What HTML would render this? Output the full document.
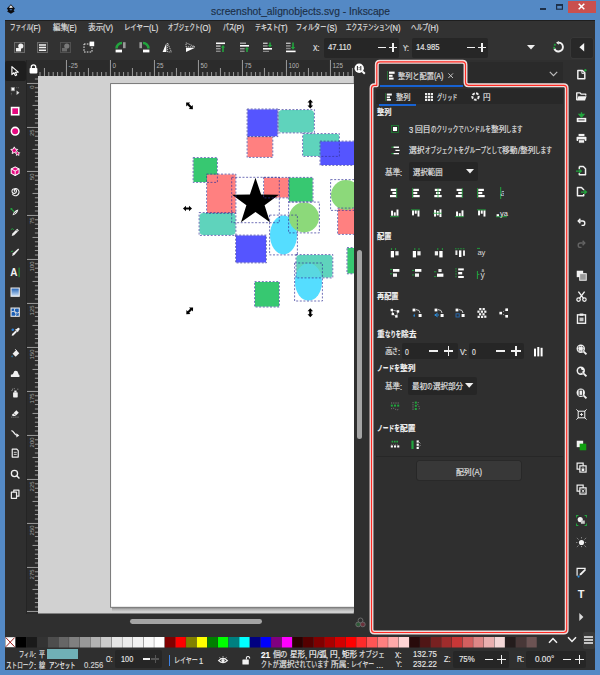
<!DOCTYPE html>
<html lang="ja"><head><meta charset="utf-8"><title>screenshot_alignobjects.svg - Inkscape</title>
<style>
html,body{margin:0;padding:0;}
body{width:600px;height:675px;overflow:hidden;background:#5489c5;position:relative;font-family:"Liberation Sans", "Noto Sans CJK JP", sans-serif;}
.b{position:absolute;display:block;}
.t{position:absolute;white-space:pre;transform-origin:0 50%;-webkit-text-stroke:0.16px currentColor;}
svg{overflow:visible;}
svg text{font-family:"Liberation Sans", "Noto Sans CJK JP", sans-serif;}
</style></head>
<body>
<div class="b" style="left:5px;top:19.6px;width:589.6px;height:650.4px;background:#2f2f2f;"></div>
<div class="b" style="left:5px;top:19.6px;width:589.6px;height:40.4px;background:#323232;"></div>
<div class="b" style="left:5px;top:19.6px;width:589.6px;height:1.2px;background:#1e1e1e;"></div>
<svg class="b" style="left:6.4px;top:3.8px;" width="9.8" height="10.2" viewBox="0 0 11 13"><path d="M5.5 0.3 L10.6 5.6 L9 8 L10.3 9.6 L5.5 12.6 L0.7 9.6 L2 8 L0.4 5.6 Z" fill="#0c0c10"/><path d="M5.5 1.6 L8.2 4.4 Q5.5 5.6 2.8 4.4 Z" fill="#e8e8e8"/><path d="M3.6 7 Q5.5 6 7.4 7 L6.4 8 L4.6 8 Z" fill="#4a78b0"/></svg>
<span class="t" id="t1_0" style="left:210.50px;top:3.50px;font-size:11px;line-height:15px;color:#1c2f47;transform:scaleX(0.9323);">screenshot_alignobjects.svg - Inkscape</span>
<div class="b" style="left:539.5px;top:8px;width:6px;height:1.6px;background:#1d2f48;"></div>
<svg class="b" style="left:556px;top:3.6px;" width="7" height="6" viewBox="0 0 7 6"><rect x=".6" y=".6" width="5.8" height="4.6" fill="none" stroke="#1d2f48" stroke-width="1.2"/><rect x=".6" y=".3" width="5.8" height="1.6" fill="#1d2f48"/></svg>
<div class="b" style="left:567.7px;top:0.5px;width:28.3px;height:12.5px;background:#c9504e;"></div>
<svg class="b" style="left:578.2px;top:3.3px;" width="7" height="7" viewBox="0 0 7 7"><path d="M.7 .7 L6.3 6.3 M6.3 .7 L.7 6.3" stroke="#fff" stroke-width="1.5"/></svg>
<span class="t" id="t2_0" style="left:9.50px;top:21.70px;font-size:8px;line-height:12px;color:#e4e4e4;transform:scaleX(0.6841);">ファイル</span>
<span class="t" id="t2_1" style="left:31.39px;top:21.70px;font-size:8.96px;line-height:12px;color:#e4e4e4;transform:scaleX(0.8400);">(F)</span>
<span class="t" id="t3_0" style="left:52.50px;top:21.70px;font-size:8px;line-height:12px;color:#e4e4e4;transform:scaleX(0.9302);">編集</span>
<span class="t" id="t3_1" style="left:67.38px;top:21.70px;font-size:8.96px;line-height:12px;color:#e4e4e4;transform:scaleX(0.8056);">(E)</span>
<span class="t" id="t4_0" style="left:88.00px;top:21.70px;font-size:8px;line-height:12px;color:#e4e4e4;transform:scaleX(0.9682);">表示</span>
<span class="t" id="t4_1" style="left:103.49px;top:21.70px;font-size:8.96px;line-height:12px;color:#e4e4e4;transform:scaleX(0.8384);">(V)</span>
<span class="t" id="t5_0" style="left:124.00px;top:21.70px;font-size:8px;line-height:12px;color:#e4e4e4;transform:scaleX(0.7964);">レイヤー</span>
<span class="t" id="t5_1" style="left:149.30px;top:21.70px;font-size:8.96px;line-height:12px;color:#e4e4e4;transform:scaleX(0.8400);">(L)</span>
<span class="t" id="t6_0" style="left:168.00px;top:21.70px;font-size:8px;line-height:12px;color:#e4e4e4;transform:scaleX(0.6694);">オブジェクト</span>
<span class="t" id="t6_1" style="left:200.13px;top:21.70px;font-size:8.96px;line-height:12px;color:#e4e4e4;transform:scaleX(0.8400);">(O)</span>
<span class="t" id="t7_0" style="left:222.50px;top:21.70px;font-size:8px;line-height:12px;color:#e4e4e4;transform:scaleX(0.7170);">パス</span>
<span class="t" id="t7_1" style="left:233.97px;top:21.70px;font-size:8.96px;line-height:12px;color:#e4e4e4;transform:scaleX(0.8400);">(P)</span>
<span class="t" id="t8_0" style="left:254.50px;top:21.70px;font-size:8px;line-height:12px;color:#e4e4e4;transform:scaleX(0.7364);">テキスト</span>
<span class="t" id="t8_1" style="left:277.89px;top:21.70px;font-size:8.96px;line-height:12px;color:#e4e4e4;transform:scaleX(0.8400);">(T)</span>
<span class="t" id="t9_0" style="left:296.30px;top:21.70px;font-size:8px;line-height:12px;color:#e4e4e4;transform:scaleX(0.7598);">フィルター</span>
<span class="t" id="t9_1" style="left:326.57px;top:21.70px;font-size:8.96px;line-height:12px;color:#e4e4e4;transform:scaleX(0.8400);">(S)</span>
<span class="t" id="t10_0" style="left:345.50px;top:21.70px;font-size:8px;line-height:12px;color:#e4e4e4;transform:scaleX(0.6909);">エクステンション</span>
<span class="t" id="t10_1" style="left:389.55px;top:21.70px;font-size:8.96px;line-height:12px;color:#e4e4e4;transform:scaleX(0.8400);">(N)</span>
<span class="t" id="t11_0" style="left:410.75px;top:21.70px;font-size:8px;line-height:12px;color:#e4e4e4;transform:scaleX(0.7105);">ヘルプ</span>
<span class="t" id="t11_1" style="left:427.80px;top:21.70px;font-size:8.96px;line-height:12px;color:#e4e4e4;transform:scaleX(0.8400);">(H)</span>
<svg class="b" style="left:13.5px;top:41.5px;" width="11" height="11" viewBox="0 0 11 11"><rect x=".5" y=".5" width="10" height="10" fill="#3c3c3c" stroke="#6a6a6a" stroke-width="1"/><circle cx="6.8" cy="4" r="2.6" fill="#f2f2f2"/><rect x="2" y="6" width="5" height="3.4" fill="#f2f2f2"/></svg>
<svg class="b" style="left:36.5px;top:41.5px;" width="11" height="11" viewBox="0 0 11 11"><rect x=".5" y=".5" width="10" height="10" fill="#3c3c3c" stroke="#6a6a6a" stroke-width="1"/><path d="M2 3 H9 M2 5.6 H9 M2 8.2 H9" stroke="#f2f2f2" stroke-width="1.5"/></svg>
<svg class="b" style="left:59.5px;top:41.5px;" width="11" height="11" viewBox="0 0 11 11"><rect x=".5" y=".5" width="10" height="10" fill="#363636" stroke="#505050" stroke-width="1"/><circle cx="6.8" cy="4" r="2.6" fill="#7a7a7a"/><rect x="2" y="6" width="5" height="3.4" fill="#6a6a6a"/></svg>
<svg class="b" style="left:82.5px;top:41px;" width="12" height="12" viewBox="0 0 12 12"><rect x="1" y="3" width="8" height="8" fill="none" stroke="#e8e8e8" stroke-width="1" stroke-dasharray="1.6 1.2"/><rect x="6.6" y=".6" width="4.6" height="4.6" fill="#fff"/></svg>
<svg class="b" style="left:114.5px;top:40.5px;" width="12" height="13" viewBox="0 0 12 13"><path d="M1.5 7.5 A5.5 5.5 0 0 1 7 2" fill="none" stroke="#22a53e" stroke-width="2.6"/><rect x="8" y="1.2" width="2.6" height="6" fill="#9a9a9a"/><rect x="0.6" y="8.6" width="6.4" height="2.8" fill="#fff"/></svg>
<svg class="b" style="left:137.5px;top:40.5px;" width="12" height="13" viewBox="0 0 12 13"><path d="M10.5 7.5 A5.5 5.5 0 0 0 5 2" fill="none" stroke="#22a53e" stroke-width="2.6"/><rect x="1.4" y="1.2" width="2.6" height="6" fill="#9a9a9a"/><rect x="5" y="8.6" width="6.4" height="2.8" fill="#fff"/></svg>
<svg class="b" style="left:162px;top:41.5px;" width="10" height="11" viewBox="0 0 10 11"><path d="M4.4 1 L4.4 10 L0.6 10 Z" fill="#fff"/><path d="M5.6 1 L5.6 10 L9.4 10 Z" fill="none" stroke="#cfcfcf" stroke-width=".9" stroke-dasharray="1.2 .8"/></svg>
<svg class="b" style="left:184.5px;top:41.5px;" width="11" height="11" viewBox="0 0 11 11"><path d="M1 5.8 L10 5.8 L1 10 Z" fill="#fff"/><path d="M1 4.8 L10 4.8 L1 .8 Z" fill="none" stroke="#cfcfcf" stroke-width=".9" stroke-dasharray="1.2 .8"/></svg>
<svg class="b" style="left:216px;top:41.5px;" width="10" height="11" viewBox="0 0 10 11"><rect x="0" y=".5" width="9" height="1.6" fill="#fff"/><rect x="0" y="3.4" width="4.6" height="1.4" fill="#bdbdbd"/><rect x="0" y="6" width="4.6" height="1.4" fill="#9a9a9a"/><rect x="0" y="8.6" width="4.6" height="1.4" fill="#8a8a8a"/><path d="M7 3 L9.2 5.6 H7.8 V10 H6.2 V5.6 H4.8 Z" fill="#22a53e"/></svg>
<svg class="b" style="left:240px;top:41.5px;" width="10" height="11" viewBox="0 0 10 11"><rect x="0" y=".6" width="6" height="1.2" fill="#bdbdbd"/><rect x="0" y="3" width="9" height="1.6" fill="#fff"/><rect x="0" y="6" width="4.6" height="1.4" fill="#9a9a9a"/><rect x="0" y="8.6" width="4.6" height="1.4" fill="#8a8a8a"/><path d="M7 5 L9.2 7.2 H7.8 V10 H6.2 V7.2 H4.8 Z" fill="#22a53e"/></svg>
<svg class="b" style="left:262.5px;top:41.5px;" width="10" height="11" viewBox="0 0 10 11"><rect x="0" y=".6" width="4.6" height="1.4" fill="#bdbdbd"/><rect x="0" y="3.2" width="4.6" height="1.4" fill="#9a9a9a"/><rect x="0" y="6" width="9" height="1.6" fill="#fff"/><rect x="0" y="8.8" width="6" height="1.2" fill="#8a8a8a"/><path d="M7 5.4 L9.2 3 H7.8 V.4 H6.2 V3 H4.8 Z" fill="#22a53e"/></svg>
<svg class="b" style="left:285.5px;top:41.5px;" width="10" height="11" viewBox="0 0 10 11"><rect x="0" y=".6" width="4.6" height="1.4" fill="#bdbdbd"/><rect x="0" y="3.2" width="4.6" height="1.4" fill="#9a9a9a"/><rect x="0" y="5.8" width="4.6" height="1.4" fill="#8a8a8a"/><rect x="0" y="8.6" width="9.6" height="1.6" fill="#fff"/><path d="M7 7.8 L9.2 5 H7.8 V.4 H6.2 V5 H4.8 Z" fill="#22a53e"/></svg>
<span class="t" id="t12_0" style="left:313.00px;top:41.60px;font-size:8.96px;line-height:12px;color:#e4e4e4;transform:scaleX(0.7675);">X:</span>
<div class="b" style="left:323.75px;top:38px;width:75px;height:19.5px;background:#262626;border-radius:2px;"></div>
<span class="t" id="t13_0" style="left:328.30px;top:40.90px;font-size:8.96px;line-height:12px;color:#e4e4e4;transform:scaleX(0.8603);">47.110</span>
<div class="b" style="left:377.5px;top:46.6px;width:8.5px;height:1.5px;background:#f0f0f0;"></div>
<div class="b" style="left:388.75px;top:46.6px;width:8.5px;height:1.5px;background:#f0f0f0;"></div>
<div class="b" style="left:392.25px;top:43.1px;width:1.5px;height:8.5px;background:#f0f0f0;"></div>
<span class="t" id="t14_0" style="left:403.00px;top:41.60px;font-size:8.96px;line-height:12px;color:#e4e4e4;transform:scaleX(0.7529);">Y:</span>
<div class="b" style="left:412px;top:38px;width:76px;height:19.5px;background:#262626;border-radius:2px;"></div>
<span class="t" id="t15_0" style="left:416.30px;top:40.90px;font-size:8.96px;line-height:12px;color:#e4e4e4;transform:scaleX(0.8543);">14.985</span>
<div class="b" style="left:466.5px;top:46.6px;width:8.5px;height:1.5px;background:#f0f0f0;"></div>
<div class="b" style="left:477.75px;top:46.6px;width:8.5px;height:1.5px;background:#f0f0f0;"></div>
<div class="b" style="left:481.25px;top:43.1px;width:1.5px;height:8.5px;background:#f0f0f0;"></div>
<svg class="b" style="left:527px;top:45px;" width="8" height="5" viewBox="0 0 8 5"><path d="M0 0 H8 L4 4.6 Z" fill="#f0f0f0"/></svg>
<svg class="b" style="left:552.5px;top:41px;" width="11" height="12" viewBox="0 0 11 12"><path d="M5.5 1.6 A4.4 4.4 0 1 1 1.4 7.6" fill="none" stroke="#f2f2f2" stroke-width="1.9"/><path d="M1.4 7.6 A4.4 4.4 0 0 1 3 2.6" fill="none" stroke="#22a53e" stroke-width="1.9" stroke-dasharray="1.8 1.2"/><path d="M5.8 0 L3 1.8 L5.8 3.8 Z" fill="#f2f2f2"/></svg>
<div class="b" style="left:571px;top:38px;width:21.5px;height:19.5px;background:#282828;border-radius:2px;box-shadow:0 0 0 .6px #3c3c3c;"></div>
<svg class="b" style="left:578.6px;top:43.4px;" width="6" height="9" viewBox="0 0 6 9"><path d="M5.2 0 V8.4 L0.4 4.2 Z" fill="#f4f4f4"/></svg>
<div class="b" style="left:5px;top:60.5px;width:20.5px;height:20px;background:#1e1e1e;border-radius:2px;"></div>
<svg class="b" style="left:9.94px;top:65.54px;" width="10.32" height="10.32" viewBox="0 0 12 12"><path d="M2.2 .8 L2.2 10 L4.6 7.8 L6.2 11.2 L7.8 10.4 L6.3 7.2 L9.6 7.2 Z" fill="#1e1e1e" stroke="#fff" stroke-width="1.3" stroke-linejoin="round"/></svg>
<svg class="b" style="left:9.94px;top:85.69px;" width="10.32" height="10.32" viewBox="0 0 12 12"><rect x="1.4" y="1.6" width="4" height="4" fill="#fff" stroke="#8c8c8c" stroke-width=".8"/><path d="M7.6 5.2 V10.6 L11 7.9 Z" fill="#d8d8d8"/><path d="M1.6 8 V10.6 M7.4 2 H10.6" stroke="#8a8a8a" stroke-width=".9" stroke-dasharray="1 1"/></svg>
<svg class="b" style="left:9.94px;top:105.84px;" width="10.32" height="10.32" viewBox="0 0 12 12"><rect x="1.8" y="1.8" width="8.4" height="8.4" fill="#e5097f" stroke="#fff" stroke-width="1.8"/></svg>
<svg class="b" style="left:9.94px;top:125.99px;" width="10.32" height="10.32" viewBox="0 0 12 12"><circle cx="6" cy="6" r="4.4" fill="#e5097f" stroke="#fff" stroke-width="1.8"/></svg>
<svg class="b" style="left:9.94px;top:146.14px;" width="10.32" height="10.32" viewBox="0 0 12 12"><path d="M5 1 L6.3 3.6 L9 4 L7 6 L7.5 8.8 L5 7.5 L2.5 8.8 L3 6 L1 4 L3.7 3.6 Z" fill="#e5097f" stroke="#fff" stroke-width="1.1" stroke-linejoin="round"/><path d="M8.6 6.2 L9.6 7.6 L11.3 7.9 L10.1 9.1 L10.4 10.9 L8.8 10.1 L7.4 10.9 L7.6 9.4" fill="#e5097f" stroke="#fff" stroke-width="1" stroke-linejoin="round"/></svg>
<svg class="b" style="left:9.94px;top:166.29px;" width="10.32" height="10.32" viewBox="0 0 12 12"><path d="M6 1 L10.6 3.4 V8.6 L6 11 L1.4 8.6 V3.4 Z" fill="#e5097f" stroke="#fff" stroke-width="1.2" stroke-linejoin="round"/><path d="M1.4 3.4 L6 5.8 L10.6 3.4 M6 5.8 V11" fill="none" stroke="#fff" stroke-width="1.1"/></svg>
<svg class="b" style="left:9.94px;top:186.44px;" width="10.32" height="10.32" viewBox="0 0 12 12"><path d="M6 6.2 A1.2 1.2 0 1 1 7.3 5 A2.6 2.6 0 1 1 4 3.6 A4.2 4.2 0 1 1 2.6 9" fill="none" stroke="#f0f0f0" stroke-width="1.3"/></svg>
<svg class="b" style="left:9.94px;top:206.59px;" width="10.32" height="10.32" viewBox="0 0 12 12"><path d="M3 9.6 C3.4 6.6 6 3.6 9.6 3 C9.4 6.2 6.6 9.2 3 9.6 Z" fill="#f0f0f0"/><path d="M1.4 2.2 L5 5.6" stroke="#22a53e" stroke-width="1.2"/><rect x=".6" y="1.2" width="2" height="2" fill="#22a53e"/><path d="M4.4 8.2 L7.2 5.4" stroke="#2f2f2f" stroke-width=".8"/></svg>
<svg class="b" style="left:9.94px;top:226.74px;" width="10.32" height="10.32" viewBox="0 0 12 12"><path d="M2 10.4 L2.8 7.6 L8.4 2 L10.4 4 L4.8 9.6 Z" fill="#f0f0f0"/><path d="M1 3 Q3 1 4.4 3.2" stroke="#22a53e" stroke-width="1.1" fill="none"/><path d="M7.2 3.2 L9.2 5.2" stroke="#2f2f2f" stroke-width=".8"/></svg>
<svg class="b" style="left:9.94px;top:246.89px;" width="10.32" height="10.32" viewBox="0 0 12 12"><path d="M2.4 10.4 L3.4 7.4 L9.6 1.6 L10.6 2.8 L5 9.2 Z" fill="#f0f0f0"/><path d="M1 6 Q2 4 3.6 5" stroke="#22a53e" stroke-width="1.1" fill="none"/></svg>
<svg class="b" style="left:9.6px;top:266.4px;" width="12" height="13" viewBox="0 0 12 13"><text x="0.2" y="10" font-size="10" font-weight="bold" fill="#f4f4f4" font-family="Liberation Sans, sans-serif">A</text><rect x="8.6" y="1.6" width="1" height="9.6" fill="#22a53e"/></svg>
<svg class="b" style="left:9.94px;top:287.19px;" width="10.32" height="10.32" viewBox="0 0 12 12"><defs><linearGradient id="gr1" x1="0" y1="0" x2="0" y2="1"><stop offset="0" stop-color="#1c5fb4"/><stop offset="1" stop-color="#cfe2f6"/></linearGradient></defs><rect x="1.2" y="1.2" width="9.6" height="9.6" fill="url(#gr1)" stroke="#f0f0f0" stroke-width="1.2"/></svg>
<svg class="b" style="left:9.94px;top:307.34px;" width="10.32" height="10.32" viewBox="0 0 12 12"><rect x="1.2" y="1.2" width="9.6" height="9.6" fill="#1c5fb4" stroke="#f0f0f0" stroke-width="1.2"/><path d="M1.2 6 Q3.6 4 6 6 T10.8 6 M6 1.2 Q4 3.6 6 6 T6 10.8" fill="none" stroke="#e8e8e8" stroke-width="1"/></svg>
<svg class="b" style="left:9.94px;top:327.49px;" width="10.32" height="10.32" viewBox="0 0 12 12"><path d="M2 10.2 L2.4 8.2 L6.6 4 L8.2 5.6 L4 9.8 Z" fill="#f0f0f0"/><path d="M6.6 2.6 L9.6 5.6 M7.6 3.8 L9.4 1.8 Q10.6 1.2 10.4 2.8 L8.6 4.6" stroke="#f0f0f0" stroke-width="1.4" fill="none"/><circle cx="3.2" cy="3.2" r="1.5" fill="#2a7fd8"/></svg>
<svg class="b" style="left:9.94px;top:347.64px;" width="10.32" height="10.32" viewBox="0 0 12 12"><path d="M3 6.6 L7.2 2.4 L10.8 6 L6.6 10.2 Z" fill="#f0f0f0"/><path d="M2.4 8 Q1 10 2.4 11 Q3.8 10 2.4 8 Z" fill="#2a9fe8"/><path d="M6 1.4 L8.2 3.6" stroke="#f0f0f0" stroke-width="1"/></svg>
<svg class="b" style="left:9.94px;top:367.79px;" width="10.32" height="10.32" viewBox="0 0 12 12"><path d="M1 10.4 H11 V8.2 Q9.8 7.6 9.6 6 Q9 3 6.4 3.2 Q4.4 3.4 4.2 5.4 Q3.8 7.4 1 7.8 Z" fill="#f0f0f0"/></svg>
<svg class="b" style="left:9.94px;top:387.94px;" width="10.32" height="10.32" viewBox="0 0 12 12"><rect x="3.6" y="5" width="5.4" height="6" rx=".8" fill="#f0f0f0"/><rect x="5" y="3" width="2.6" height="2" fill="#f0f0f0"/><path d="M2.4 1.4 h1 M4.4 .8 h1 M1.8 3 h1 M8.6 1.4 h1" stroke="#bdbdbd" stroke-width="1"/></svg>
<svg class="b" style="left:9.94px;top:408.09px;" width="10.32" height="10.32" viewBox="0 0 12 12"><path d="M2 8 L7.4 2.6 L10.2 5.4 L6.4 9.2 H3.2 Z" fill="#f0f0f0"/><path d="M4 6 L6.8 8.8" stroke="#2f2f2f" stroke-width=".8"/><path d="M1.4 10.6 H10.6" stroke="#9a9a9a" stroke-width="1" stroke-dasharray="1.4 1"/></svg>
<svg class="b" style="left:9.94px;top:428.24px;" width="10.32" height="10.32" viewBox="0 0 12 12"><path d="M1.6 3 C5 3 4.6 8.6 8.6 8.6" fill="none" stroke="#f0f0f0" stroke-width="1.5"/><path d="M7.4 6 L10.8 8.6 L7.4 11 Z" fill="#f0f0f0"/></svg>
<svg class="b" style="left:9.94px;top:448.39px;" width="10.32" height="10.32" viewBox="0 0 12 12"><path d="M2.6 1.4 H8 L9.6 3 V10.6 H2.6 Z" fill="none" stroke="#f0f0f0" stroke-width="1.4" stroke-linejoin="round"/><path d="M4.4 5 H7.8 M4.4 7.4 H7.8" stroke="#f0f0f0" stroke-width="1"/></svg>
<svg class="b" style="left:9.94px;top:468.54px;" width="10.32" height="10.32" viewBox="0 0 12 12"><circle cx="5.2" cy="5.2" r="3.6" fill="none" stroke="#f0f0f0" stroke-width="1.5"/><path d="M7.8 7.8 L11 11" stroke="#f0f0f0" stroke-width="1.7"/></svg>
<svg class="b" style="left:9.94px;top:488.69px;" width="10.32" height="10.32" viewBox="0 0 12 12"><path d="M4.4 1.2 H10.4 V8.4 H4.4 Z" fill="none" stroke="#f0f0f0" stroke-width="1.4" stroke-linejoin="round"/><path d="M1.6 3.6 H7.6 V10.8 H1.6 Z" fill="#2f2f2f" stroke="#f0f0f0" stroke-width="1.4" stroke-linejoin="round"/></svg>
<div class="b" style="left:26.5px;top:60px;width:327.3px;height:16px;background:#2b2b2b;"></div>
<div class="b" style="left:26.5px;top:76px;width:11.5px;height:537.5px;background:#2b2b2b;"></div>
<div class="b" style="left:25.5px;top:60px;width:1px;height:553.5px;background:#242424;"></div>
<svg class="b" style="left:28.5px;top:64px;" width="9" height="10" viewBox="0 0 9 10"><rect x=".6" y="4" width="7.8" height="5.4" rx=".8" fill="#fff"/><path d="M2.3 4.4 V3 A2.2 2.2 0 0 1 6.7 3 V4.4" fill="none" stroke="#fff" stroke-width="1.3"/></svg>
<svg class="b" style="left:38px;top:60px;overflow:hidden;" width="315.8" height="16" viewBox="0 0 315.8 16"><g fill="#a6a6a6"><rect x="1.55" y="12.00" width="0.9" height="4.00"/><rect x="5.95" y="8.00" width="0.9" height="8.00"/><rect x="10.35" y="12.00" width="0.9" height="4.00"/><rect x="14.75" y="12.00" width="0.9" height="4.00"/><rect x="19.15" y="12.00" width="0.9" height="4.00"/><rect x="23.55" y="12.00" width="0.9" height="4.00"/><rect x="27.95" y="0.00" width="0.9" height="16.00"/><rect x="32.35" y="12.00" width="0.9" height="4.00"/><rect x="36.75" y="12.00" width="0.9" height="4.00"/><rect x="41.15" y="12.00" width="0.9" height="4.00"/><rect x="45.55" y="12.00" width="0.9" height="4.00"/><rect x="49.95" y="8.00" width="0.9" height="8.00"/><rect x="54.35" y="12.00" width="0.9" height="4.00"/><rect x="58.75" y="12.00" width="0.9" height="4.00"/><rect x="63.15" y="12.00" width="0.9" height="4.00"/><rect x="67.55" y="12.00" width="0.9" height="4.00"/><rect x="71.95" y="0.00" width="0.9" height="16.00"/><rect x="76.35" y="12.00" width="0.9" height="4.00"/><rect x="80.75" y="12.00" width="0.9" height="4.00"/><rect x="85.15" y="12.00" width="0.9" height="4.00"/><rect x="89.55" y="12.00" width="0.9" height="4.00"/><rect x="93.95" y="8.00" width="0.9" height="8.00"/><rect x="98.35" y="12.00" width="0.9" height="4.00"/><rect x="102.75" y="12.00" width="0.9" height="4.00"/><rect x="107.15" y="12.00" width="0.9" height="4.00"/><rect x="111.55" y="12.00" width="0.9" height="4.00"/><rect x="115.95" y="0.00" width="0.9" height="16.00"/><rect x="120.35" y="12.00" width="0.9" height="4.00"/><rect x="124.75" y="12.00" width="0.9" height="4.00"/><rect x="129.15" y="12.00" width="0.9" height="4.00"/><rect x="133.55" y="12.00" width="0.9" height="4.00"/><rect x="137.95" y="8.00" width="0.9" height="8.00"/><rect x="142.35" y="12.00" width="0.9" height="4.00"/><rect x="146.75" y="12.00" width="0.9" height="4.00"/><rect x="151.15" y="12.00" width="0.9" height="4.00"/><rect x="155.55" y="12.00" width="0.9" height="4.00"/><rect x="159.95" y="0.00" width="0.9" height="16.00"/><rect x="164.35" y="12.00" width="0.9" height="4.00"/><rect x="168.75" y="12.00" width="0.9" height="4.00"/><rect x="173.15" y="12.00" width="0.9" height="4.00"/><rect x="177.55" y="12.00" width="0.9" height="4.00"/><rect x="181.95" y="8.00" width="0.9" height="8.00"/><rect x="186.35" y="12.00" width="0.9" height="4.00"/><rect x="190.75" y="12.00" width="0.9" height="4.00"/><rect x="195.15" y="12.00" width="0.9" height="4.00"/><rect x="199.55" y="12.00" width="0.9" height="4.00"/><rect x="203.95" y="0.00" width="0.9" height="16.00"/><rect x="208.35" y="12.00" width="0.9" height="4.00"/><rect x="212.75" y="12.00" width="0.9" height="4.00"/><rect x="217.15" y="12.00" width="0.9" height="4.00"/><rect x="221.55" y="12.00" width="0.9" height="4.00"/><rect x="225.95" y="8.00" width="0.9" height="8.00"/><rect x="230.35" y="12.00" width="0.9" height="4.00"/><rect x="234.75" y="12.00" width="0.9" height="4.00"/><rect x="239.15" y="12.00" width="0.9" height="4.00"/><rect x="243.55" y="12.00" width="0.9" height="4.00"/><rect x="247.95" y="0.00" width="0.9" height="16.00"/><rect x="252.35" y="12.00" width="0.9" height="4.00"/><rect x="256.75" y="12.00" width="0.9" height="4.00"/><rect x="261.15" y="12.00" width="0.9" height="4.00"/><rect x="265.55" y="12.00" width="0.9" height="4.00"/><rect x="269.95" y="8.00" width="0.9" height="8.00"/><rect x="274.35" y="12.00" width="0.9" height="4.00"/><rect x="278.75" y="12.00" width="0.9" height="4.00"/><rect x="283.15" y="12.00" width="0.9" height="4.00"/><rect x="287.55" y="12.00" width="0.9" height="4.00"/><rect x="291.95" y="0.00" width="0.9" height="16.00"/><rect x="296.35" y="12.00" width="0.9" height="4.00"/><rect x="300.75" y="12.00" width="0.9" height="4.00"/><rect x="305.15" y="12.00" width="0.9" height="4.00"/><rect x="309.55" y="12.00" width="0.9" height="4.00"/><rect x="313.95" y="8.00" width="0.9" height="8.00"/></g><text x="30.60" y="7.8" font-size="6.3" fill="#b4b4b4">-25</text><text x="74.60" y="7.8" font-size="6.3" fill="#b4b4b4">0</text><text x="118.60" y="7.8" font-size="6.3" fill="#b4b4b4">25</text><text x="162.60" y="7.8" font-size="6.3" fill="#b4b4b4">50</text><text x="206.60" y="7.8" font-size="6.3" fill="#b4b4b4">75</text><text x="250.60" y="7.8" font-size="6.3" fill="#b4b4b4">100</text><text x="294.60" y="7.8" font-size="6.3" fill="#b4b4b4">125</text></svg>
<svg class="b" style="left:26.5px;top:76px;overflow:hidden;" width="11.5" height="537.5" viewBox="0 0 11.5 537.5"><g fill="#a6a6a6"><rect x="7.90" y="2.55" width="3.60" height="0.9"/><rect x="0.00" y="6.95" width="11.50" height="0.9"/><rect x="7.90" y="11.35" width="3.60" height="0.9"/><rect x="7.90" y="15.75" width="3.60" height="0.9"/><rect x="7.90" y="20.15" width="3.60" height="0.9"/><rect x="7.90" y="24.55" width="3.60" height="0.9"/><rect x="5.50" y="28.95" width="6.00" height="0.9"/><rect x="7.90" y="33.35" width="3.60" height="0.9"/><rect x="7.90" y="37.75" width="3.60" height="0.9"/><rect x="7.90" y="42.15" width="3.60" height="0.9"/><rect x="7.90" y="46.55" width="3.60" height="0.9"/><rect x="0.00" y="50.95" width="11.50" height="0.9"/><rect x="7.90" y="55.35" width="3.60" height="0.9"/><rect x="7.90" y="59.75" width="3.60" height="0.9"/><rect x="7.90" y="64.15" width="3.60" height="0.9"/><rect x="7.90" y="68.55" width="3.60" height="0.9"/><rect x="5.50" y="72.95" width="6.00" height="0.9"/><rect x="7.90" y="77.35" width="3.60" height="0.9"/><rect x="7.90" y="81.75" width="3.60" height="0.9"/><rect x="7.90" y="86.15" width="3.60" height="0.9"/><rect x="7.90" y="90.55" width="3.60" height="0.9"/><rect x="0.00" y="94.95" width="11.50" height="0.9"/><rect x="7.90" y="99.35" width="3.60" height="0.9"/><rect x="7.90" y="103.75" width="3.60" height="0.9"/><rect x="7.90" y="108.15" width="3.60" height="0.9"/><rect x="7.90" y="112.55" width="3.60" height="0.9"/><rect x="5.50" y="116.95" width="6.00" height="0.9"/><rect x="7.90" y="121.35" width="3.60" height="0.9"/><rect x="7.90" y="125.75" width="3.60" height="0.9"/><rect x="7.90" y="130.15" width="3.60" height="0.9"/><rect x="7.90" y="134.55" width="3.60" height="0.9"/><rect x="0.00" y="138.95" width="11.50" height="0.9"/><rect x="7.90" y="143.35" width="3.60" height="0.9"/><rect x="7.90" y="147.75" width="3.60" height="0.9"/><rect x="7.90" y="152.15" width="3.60" height="0.9"/><rect x="7.90" y="156.55" width="3.60" height="0.9"/><rect x="5.50" y="160.95" width="6.00" height="0.9"/><rect x="7.90" y="165.35" width="3.60" height="0.9"/><rect x="7.90" y="169.75" width="3.60" height="0.9"/><rect x="7.90" y="174.15" width="3.60" height="0.9"/><rect x="7.90" y="178.55" width="3.60" height="0.9"/><rect x="0.00" y="182.95" width="11.50" height="0.9"/><rect x="7.90" y="187.35" width="3.60" height="0.9"/><rect x="7.90" y="191.75" width="3.60" height="0.9"/><rect x="7.90" y="196.15" width="3.60" height="0.9"/><rect x="7.90" y="200.55" width="3.60" height="0.9"/><rect x="5.50" y="204.95" width="6.00" height="0.9"/><rect x="7.90" y="209.35" width="3.60" height="0.9"/><rect x="7.90" y="213.75" width="3.60" height="0.9"/><rect x="7.90" y="218.15" width="3.60" height="0.9"/><rect x="7.90" y="222.55" width="3.60" height="0.9"/><rect x="0.00" y="226.95" width="11.50" height="0.9"/><rect x="7.90" y="231.35" width="3.60" height="0.9"/><rect x="7.90" y="235.75" width="3.60" height="0.9"/><rect x="7.90" y="240.15" width="3.60" height="0.9"/><rect x="7.90" y="244.55" width="3.60" height="0.9"/><rect x="5.50" y="248.95" width="6.00" height="0.9"/><rect x="7.90" y="253.35" width="3.60" height="0.9"/><rect x="7.90" y="257.75" width="3.60" height="0.9"/><rect x="7.90" y="262.15" width="3.60" height="0.9"/><rect x="7.90" y="266.55" width="3.60" height="0.9"/><rect x="0.00" y="270.95" width="11.50" height="0.9"/><rect x="7.90" y="275.35" width="3.60" height="0.9"/><rect x="7.90" y="279.75" width="3.60" height="0.9"/><rect x="7.90" y="284.15" width="3.60" height="0.9"/><rect x="7.90" y="288.55" width="3.60" height="0.9"/><rect x="5.50" y="292.95" width="6.00" height="0.9"/><rect x="7.90" y="297.35" width="3.60" height="0.9"/><rect x="7.90" y="301.75" width="3.60" height="0.9"/><rect x="7.90" y="306.15" width="3.60" height="0.9"/><rect x="7.90" y="310.55" width="3.60" height="0.9"/><rect x="0.00" y="314.95" width="11.50" height="0.9"/><rect x="7.90" y="319.35" width="3.60" height="0.9"/><rect x="7.90" y="323.75" width="3.60" height="0.9"/><rect x="7.90" y="328.15" width="3.60" height="0.9"/><rect x="7.90" y="332.55" width="3.60" height="0.9"/><rect x="5.50" y="336.95" width="6.00" height="0.9"/><rect x="7.90" y="341.35" width="3.60" height="0.9"/><rect x="7.90" y="345.75" width="3.60" height="0.9"/><rect x="7.90" y="350.15" width="3.60" height="0.9"/><rect x="7.90" y="354.55" width="3.60" height="0.9"/><rect x="0.00" y="358.95" width="11.50" height="0.9"/><rect x="7.90" y="363.35" width="3.60" height="0.9"/><rect x="7.90" y="367.75" width="3.60" height="0.9"/><rect x="7.90" y="372.15" width="3.60" height="0.9"/><rect x="7.90" y="376.55" width="3.60" height="0.9"/><rect x="5.50" y="380.95" width="6.00" height="0.9"/><rect x="7.90" y="385.35" width="3.60" height="0.9"/><rect x="7.90" y="389.75" width="3.60" height="0.9"/><rect x="7.90" y="394.15" width="3.60" height="0.9"/><rect x="7.90" y="398.55" width="3.60" height="0.9"/><rect x="0.00" y="402.95" width="11.50" height="0.9"/><rect x="7.90" y="407.35" width="3.60" height="0.9"/><rect x="7.90" y="411.75" width="3.60" height="0.9"/><rect x="7.90" y="416.15" width="3.60" height="0.9"/><rect x="7.90" y="420.55" width="3.60" height="0.9"/><rect x="5.50" y="424.95" width="6.00" height="0.9"/><rect x="7.90" y="429.35" width="3.60" height="0.9"/><rect x="7.90" y="433.75" width="3.60" height="0.9"/><rect x="7.90" y="438.15" width="3.60" height="0.9"/><rect x="7.90" y="442.55" width="3.60" height="0.9"/><rect x="0.00" y="446.95" width="11.50" height="0.9"/><rect x="7.90" y="451.35" width="3.60" height="0.9"/><rect x="7.90" y="455.75" width="3.60" height="0.9"/><rect x="7.90" y="460.15" width="3.60" height="0.9"/><rect x="7.90" y="464.55" width="3.60" height="0.9"/><rect x="5.50" y="468.95" width="6.00" height="0.9"/><rect x="7.90" y="473.35" width="3.60" height="0.9"/><rect x="7.90" y="477.75" width="3.60" height="0.9"/><rect x="7.90" y="482.15" width="3.60" height="0.9"/><rect x="7.90" y="486.55" width="3.60" height="0.9"/><rect x="0.00" y="490.95" width="11.50" height="0.9"/><rect x="7.90" y="495.35" width="3.60" height="0.9"/><rect x="7.90" y="499.75" width="3.60" height="0.9"/><rect x="7.90" y="504.15" width="3.60" height="0.9"/><rect x="7.90" y="508.55" width="3.60" height="0.9"/><rect x="5.50" y="512.95" width="6.00" height="0.9"/><rect x="7.90" y="517.35" width="3.60" height="0.9"/><rect x="7.90" y="521.75" width="3.60" height="0.9"/><rect x="7.90" y="526.15" width="3.60" height="0.9"/><rect x="7.90" y="530.55" width="3.60" height="0.9"/><rect x="0.00" y="534.95" width="11.50" height="0.9"/></g><text transform="translate(7.2 9.40) rotate(-90)" text-anchor="end" font-size="6" fill="#a0a0a0">0</text><text transform="translate(7.2 53.40) rotate(-90)" text-anchor="end" font-size="6" fill="#a0a0a0">25</text><text transform="translate(7.2 97.40) rotate(-90)" text-anchor="end" font-size="6" fill="#a0a0a0">50</text><text transform="translate(7.2 141.40) rotate(-90)" text-anchor="end" font-size="6" fill="#a0a0a0">75</text><text transform="translate(7.2 185.40) rotate(-90)" text-anchor="end" font-size="6" fill="#a0a0a0">100</text><text transform="translate(7.2 229.40) rotate(-90)" text-anchor="end" font-size="6" fill="#a0a0a0">125</text><text transform="translate(7.2 273.40) rotate(-90)" text-anchor="end" font-size="6" fill="#a0a0a0">150</text><text transform="translate(7.2 317.40) rotate(-90)" text-anchor="end" font-size="6" fill="#a0a0a0">175</text><text transform="translate(7.2 361.40) rotate(-90)" text-anchor="end" font-size="6" fill="#a0a0a0">200</text><text transform="translate(7.2 405.40) rotate(-90)" text-anchor="end" font-size="6" fill="#a0a0a0">225</text><text transform="translate(7.2 449.40) rotate(-90)" text-anchor="end" font-size="6" fill="#a0a0a0">250</text><text transform="translate(7.2 493.40) rotate(-90)" text-anchor="end" font-size="6" fill="#a0a0a0">275</text></svg>
<svg class="b" style="left:38px;top:76px;overflow:hidden;" width="315.8" height="537.5" viewBox="0 0 315.8 537.5"><rect width="315.8" height="537.5" fill="#d1d1d1"/><defs><linearGradient id="shg" x1="0" y1="0" x2="0" y2="1"><stop offset="0" stop-color="#808080"/><stop offset=".5" stop-color="#b4b4b4"/><stop offset="1" stop-color="#d1d1d1"/></linearGradient></defs><rect x="74.0" y="531.3" width="300" height="4.4" fill="url(#shg)"/><rect x="72.6" y="7.6" width="300" height="523.7" fill="#fff" stroke="#6c6c6c" stroke-width=".9"/><rect x="209.5" y="33.4" width="30.0" height="26.8" rx="0" fill="#5555ff"/><rect x="240.4" y="34.0" width="35.6" height="22.5" rx="4" fill="#5fd3bc"/><rect x="209.5" y="61.0" width="24.9" height="20.0" rx="0" fill="#ff8080"/><rect x="265.0" y="58.0" width="36.0" height="22.0" rx="1.5" fill="#5fd3bc"/><rect x="282.4" y="65.5" width="35.6" height="23.5" rx="0" fill="#5555ff"/><rect x="155.5" y="82.0" width="23.5" height="24.0" rx="0" fill="#37c871"/><rect x="169.0" y="98.5" width="28.5" height="38.5" rx="0" fill="#ff8080"/><rect x="226.0" y="101.8" width="24.6" height="19.7" rx="0" fill="#ff8080"/><rect x="251.0" y="101.8" width="23.6" height="23.7" rx="0" fill="#37c871"/><rect x="161.5" y="137.0" width="36.0" height="22.0" rx="4" fill="#5fd3bc"/><rect x="198.0" y="159.5" width="30.0" height="27.0" rx="0" fill="#5555ff"/><ellipse cx="245.5" cy="159.0" rx="13.5" ry="19.5" fill="#55ddff" fill-opacity="1"/><ellipse cx="266.0" cy="141.5" rx="15.0" ry="15.0" fill="#8cd97a" fill-opacity="1"/><rect x="258.4" y="179.0" width="36.0" height="22.5" rx="3" fill="#5fd3bc"/><ellipse cx="270.5" cy="206.0" rx="13.5" ry="18.6" fill="#55ddff" fill-opacity="1"/><clipPath id="cpe"><ellipse cx="270.5" cy="206.0" rx="13.5" ry="18.6"/></clipPath><rect x="258.4" y="179.0" width="36" height="22.5" rx="3" fill="#5fd3bc" fill-opacity=".45" clip-path="url(#cpe)"/><rect x="217.0" y="206.0" width="24.0" height="24.6" rx="0" fill="#37c871"/><rect x="300.0" y="132.5" width="18.0" height="25.5" rx="0" fill="#ff8080"/><ellipse cx="308.0" cy="119.0" rx="15.0" ry="15.0" fill="#8cd97a" fill-opacity="1"/><rect x="309.4" y="172.0" width="8.6" height="25.4" rx="0" fill="#37c871"/><polygon points="217.5,101.7 223.1,118.5 240.9,118.7 226.6,129.3 232.0,146.2 217.5,135.9 203.0,146.2 208.4,129.3 194.1,118.7 211.9,118.5" fill="#000"/><g fill="none" stroke="#33339a" stroke-width=".7" stroke-dasharray="2 1.6"><rect x="209.1" y="33.0" width="30.8" height="27.6"/><rect x="240.0" y="33.6" width="36.4" height="23.3"/><rect x="209.1" y="60.6" width="25.7" height="20.8"/><rect x="264.6" y="57.6" width="36.8" height="22.8"/><rect x="282.0" y="65.1" width="36.4" height="24.3"/><rect x="155.1" y="81.6" width="24.3" height="24.8"/><rect x="168.6" y="98.1" width="29.3" height="39.3"/><rect x="225.6" y="101.4" width="25.4" height="20.5"/><rect x="250.6" y="101.4" width="24.4" height="24.5"/><rect x="161.1" y="136.6" width="36.8" height="22.8"/><rect x="197.6" y="159.1" width="30.8" height="27.8"/><rect x="231.6" y="139.1" width="27.8" height="39.8"/><rect x="250.6" y="126.1" width="30.8" height="30.8"/><rect x="258.0" y="178.6" width="36.8" height="23.3"/><rect x="256.6" y="187.0" width="27.8" height="38.0"/><rect x="216.6" y="205.6" width="24.8" height="25.4"/><rect x="299.6" y="132.1" width="18.8" height="26.3"/><rect x="292.6" y="103.6" width="30.8" height="30.8"/><rect x="309.0" y="171.6" width="9.4" height="26.2"/><rect x="193.7" y="101.3" width="47.6" height="45.4"/></g><g transform="translate(151.5 29.8) rotate(45)"><path d="M-4.8 0 L-1.8 -2.8 V-1.1 H1.8 V-2.8 L4.8 0 L1.8 2.8 V1.1 H-1.8 V2.8 Z" fill="#000"/></g><g transform="translate(272.3 28.0) rotate(90)"><path d="M-4.5 0 L-1.5 -2.8 V-1.1 H1.5 V-2.8 L4.5 0 L1.5 2.8 V1.1 H-1.5 V2.8 Z" fill="#000"/></g><g transform="translate(149.5 132.5) rotate(0)"><path d="M-4.5 0 L-1.5 -2.8 V-1.1 H1.5 V-2.8 L4.5 0 L1.5 2.8 V1.1 H-1.5 V2.8 Z" fill="#000"/></g><g transform="translate(151.7 234.8) rotate(-45)"><path d="M-4.8 0 L-1.8 -2.8 V-1.1 H1.8 V-2.8 L4.8 0 L1.8 2.8 V1.1 H-1.8 V2.8 Z" fill="#000"/></g><g transform="translate(272.3 236.7) rotate(90)"><path d="M-4.5 0 L-1.5 -2.8 V-1.1 H1.5 V-2.8 L4.5 0 L1.5 2.8 V1.1 H-1.5 V2.8 Z" fill="#000"/></g></svg>
<svg class="b" style="left:354.4px;top:62.8px;" width="12" height="12" viewBox="0 0 12 12"><circle cx="5.2" cy="5.2" r="4.7" fill="#fff"/><path d="M8.4 8.4 L10.8 10.8" stroke="#fff" stroke-width="2"/><path d="M3.4 3 V7.4 M6.8 3 V7.4" stroke="#2b2b2b" stroke-width="1"/><path d="M5.1 4 v.9 M5.1 5.8 v.9" stroke="#2b2b2b" stroke-width=".8"/></svg>
<div class="b" style="left:357.2px;top:250px;width:5px;height:189px;background:#a4a4a4;border-radius:2.5px;"></div>
<div class="b" style="left:130px;top:619.4px;width:132px;height:4.8px;background:#a4a4a4;border-radius:2.4px;"></div>
<svg class="b" style="left:355px;top:617px;" width="11" height="11" viewBox="0 0 11 11"><circle cx="5.5" cy="3.4" r="2.4" fill="none" stroke="#6a6a6a" stroke-width="1"/><circle cx="3.2" cy="7.4" r="2.4" fill="#2f5a38" stroke="#6a6a6a" stroke-width="1"/><circle cx="7.8" cy="7.4" r="2.4" fill="#6a2f3a" stroke="#6a6a6a" stroke-width="1"/></svg>
<div class="b" style="left:376px;top:62px;width:187px;height:23.5px;background:#2a2a2a;"></div>
<div class="b" style="left:376.5px;top:62px;width:88px;height:25px;background:#2f2f2f;"></div>
<svg class="b" style="left:0px;top:0px;" width="600" height="675" viewBox="0 0 600 675"><path d="M376.8 85.3 V64.8 Q376.8 61.8 379.8 61.8 H462.5 Q465.5 61.8 465.5 64.8 V82.3 Q465.5 85.3 468.5 85.3 H563.7 Q566.7 85.3 566.7 88.3 V629.5 Q566.7 632.5 563.7 632.5 H374.5 Q371.5 632.5 371.5 629.5 V88.3 Q371.5 85.3 374.5 85.3 Z" fill="none" stroke="#f0dcdc" stroke-width="3.9" stroke-linejoin="round"/><path d="M376.8 85.3 V64.8 Q376.8 61.8 379.8 61.8 H462.5 Q465.5 61.8 465.5 64.8 V82.3 Q465.5 85.3 468.5 85.3 H563.7 Q566.7 85.3 566.7 88.3 V629.5 Q566.7 632.5 563.7 632.5 H374.5 Q371.5 632.5 371.5 629.5 V88.3 Q371.5 85.3 374.5 85.3 Z" fill="none" stroke="#ff2a22" stroke-width="1.15" stroke-linejoin="round"/></svg>
<svg class="b" style="left:387.4px;top:71px;" width="8" height="9" viewBox="0 0 8 9"><rect x="0" y="0" width="1" height="9" fill="#22a53e" opacity=".55"/><rect x="2" y=".6" width="5.6" height="2.2" fill="#fff"/><rect x="2" y="3.8" width="3.6" height="2" fill="#fff"/><rect x="2" y="6.6" width="4.6" height="2" fill="#fff"/></svg>
<span class="t" id="t16_0" style="left:397.80px;top:70.35px;font-size:8.3px;line-height:12.3px;color:#e4e4e4;transform:scaleX(0.8659);">整列と配置(A)</span>
<svg class="b" style="left:447.6px;top:72.8px;" width="5.4" height="5.4" viewBox="0 0 5.4 5.4"><path d="M.4 .4 L5 5 M5 .4 L.4 5" stroke="#c4c4c4" stroke-width="1"/></svg>
<div class="b" style="left:379.8px;top:84.5px;width:82.8px;height:2.5px;background:#1762d2;"></div>
<svg class="b" style="left:549px;top:71px;" width="9" height="6" viewBox="0 0 9 6"><path d="M.8 .8 L4.5 4.6 L8.2 .8" fill="none" stroke="#bdbdbd" stroke-width="1.2"/></svg>
<div class="b" style="left:376px;top:88.5px;width:187px;height:15.2px;background:#282828;"></div>
<svg class="b" style="left:385px;top:92.6px;" width="7.2" height="8.1" viewBox="0 0 8 9"><rect x="0" y="0" width="1" height="9" fill="#22a53e" opacity=".55"/><rect x="2" y=".6" width="5.6" height="2.2" fill="#fff"/><rect x="2" y="3.8" width="3.6" height="2" fill="#fff"/><rect x="2" y="6.6" width="4.6" height="2" fill="#fff"/></svg>
<span class="t" id="t17_0" style="left:395.70px;top:92.00px;font-size:8px;line-height:12px;color:#e4e4e4;transform:scaleX(0.9125);">整列</span>
<div class="b" style="left:379px;top:103.6px;width:36.5px;height:2.1px;background:#1762d2;"></div>
<svg class="b" style="left:424.5px;top:92.5px;" width="8" height="8" viewBox="0 0 8 8"><g fill="#ececec"><rect x="0" y="0" width="2.2" height="2.2"/><rect x="2.9" y="0" width="2.2" height="2.2"/><rect x="5.8" y="0" width="2.2" height="2.2"/><rect x="0" y="2.9" width="2.2" height="2.2"/><rect x="2.9" y="2.9" width="2.2" height="2.2"/><rect x="5.8" y="2.9" width="2.2" height="2.2"/><rect x="0" y="5.8" width="2.2" height="2.2"/><rect x="2.9" y="5.8" width="2.2" height="2.2"/><rect x="5.8" y="5.8" width="2.2" height="2.2"/></g></svg>
<span class="t" id="t18_0" style="left:437.00px;top:92.00px;font-size:8px;line-height:12px;color:#e4e4e4;transform:scaleX(0.6406);">グリッド</span>
<svg class="b" style="left:470.5px;top:92px;" width="9" height="9" viewBox="0 0 9 9"><circle cx="4.5" cy="4.5" r="3.2" fill="none" stroke="#ececec" stroke-width="2" stroke-dasharray="2.6 1.2"/></svg>
<span class="t" id="t19_0" style="left:483.00px;top:92.00px;font-size:8px;line-height:12px;color:#e4e4e4;transform:scaleX(0.9375);">円</span>
<span class="t" id="t20_0" style="left:377.00px;top:107.30px;font-size:8px;line-height:12px;color:#f2f2f2;font-weight:bold;transform:scaleX(0.9062);">整列</span>
<span class="t" id="t21_0" style="left:377.00px;top:231.30px;font-size:8px;line-height:12px;color:#f2f2f2;font-weight:bold;transform:scaleX(0.9062);">配置</span>
<span class="t" id="t22_0" style="left:377.00px;top:291.30px;font-size:8px;line-height:12px;color:#f2f2f2;font-weight:bold;transform:scaleX(0.8958);">再配置</span>
<span class="t" id="t23_0" style="left:377.00px;top:329.30px;font-size:8px;line-height:12px;color:#f2f2f2;font-weight:bold;transform:scaleX(0.9700);">重</span>
<span class="t" id="t23_1" style="left:384.76px;top:329.30px;font-size:8px;line-height:12px;color:#f2f2f2;font-weight:bold;transform:scaleX(0.6758);">なりを</span>
<span class="t" id="t23_2" style="left:400.98px;top:329.30px;font-size:8px;line-height:12px;color:#f2f2f2;font-weight:bold;transform:scaleX(0.9700);">除去</span>
<span class="t" id="t24_0" style="left:377.00px;top:362.90px;font-size:8px;line-height:12px;color:#f2f2f2;font-weight:bold;transform:scaleX(0.7181);">ノードを</span>
<span class="t" id="t24_1" style="left:399.98px;top:362.90px;font-size:8px;line-height:12px;color:#f2f2f2;font-weight:bold;transform:scaleX(0.9700);">整列</span>
<span class="t" id="t25_0" style="left:377.00px;top:423.30px;font-size:8px;line-height:12px;color:#f2f2f2;font-weight:bold;transform:scaleX(0.7181);">ノードを</span>
<span class="t" id="t25_1" style="left:399.98px;top:423.30px;font-size:8px;line-height:12px;color:#f2f2f2;font-weight:bold;transform:scaleX(0.9700);">配置</span>
<svg class="b" style="left:391px;top:125px;" width="8" height="8" viewBox="0 0 8 8"><rect x=".5" y=".5" width="7" height="7" fill="none" stroke="#1d7a31" stroke-width=".9"/><rect x="2" y="2" width="4" height="4" fill="#fff"/></svg>
<span class="t" id="t26_0" style="left:409.00px;top:124.00px;font-size:8.96px;line-height:12px;color:#e4e4e4;transform:scaleX(0.8400);">3 </span>
<span class="t" id="t26_1" style="left:415.27px;top:124.00px;font-size:8px;line-height:12px;color:#e4e4e4;transform:scaleX(0.9700);">回目</span>
<span class="t" id="t26_2" style="left:430.79px;top:124.00px;font-size:8px;line-height:12px;color:#e4e4e4;transform:scaleX(0.6802);">のクリックでハンドルを</span>
<span class="t" id="t26_3" style="left:490.65px;top:124.00px;font-size:8px;line-height:12px;color:#e4e4e4;transform:scaleX(0.9700);">整列</span>
<span class="t" id="t26_4" style="left:506.17px;top:124.00px;font-size:8px;line-height:12px;color:#e4e4e4;transform:scaleX(0.6802);">します</span>
<svg class="b" style="left:391px;top:146px;" width="9" height="9" viewBox="0 0 9 9"><path d="M.4 1.2 H4 M.4 7.6 H4" stroke="#22a53e" stroke-width="1"/><path d="M2.6 1.2 H8 M4.4 4.4 H8.6 M2.6 7.6 H8" stroke="#fff" stroke-width="1.4"/></svg>
<span class="t" id="t27_0" style="left:409.00px;top:145.30px;font-size:8px;line-height:12px;color:#e4e4e4;transform:scaleX(0.9700);">選択</span>
<span class="t" id="t27_1" style="left:424.52px;top:145.30px;font-size:8px;line-height:12px;color:#e4e4e4;transform:scaleX(0.6974);">オブジェクトをグループとして</span>
<span class="t" id="t27_2" style="left:502.12px;top:145.30px;font-size:8px;line-height:12px;color:#e4e4e4;transform:scaleX(0.9700);">移動</span>
<span class="t" id="t27_3" style="left:517.64px;top:145.30px;font-size:8.96px;line-height:12px;color:#e4e4e4;transform:scaleX(0.8400);">/</span>
<span class="t" id="t27_4" style="left:519.74px;top:145.30px;font-size:8px;line-height:12px;color:#e4e4e4;transform:scaleX(0.9700);">整列</span>
<span class="t" id="t27_5" style="left:535.26px;top:145.30px;font-size:8px;line-height:12px;color:#e4e4e4;transform:scaleX(0.6974);">します</span>
<span class="t" id="t28_0" style="left:384.50px;top:166.60px;font-size:8px;line-height:12px;color:#e4e4e4;transform:scaleX(0.9634);">基準</span>
<span class="t" id="t28_1" style="left:399.91px;top:166.60px;font-size:8.96px;line-height:12px;color:#e4e4e4;transform:scaleX(0.8343);">:</span>
<div class="b" style="left:409px;top:162px;width:68.5px;height:18.5px;background:#262626;border-radius:2px;"></div>
<span class="t" id="t29_0" style="left:412.50px;top:166.60px;font-size:8px;line-height:12px;color:#e4e4e4;transform:scaleX(0.9219);">選択範囲</span>
<svg class="b" style="left:466px;top:169px;" width="8" height="5" viewBox="0 0 8 5"><path d="M0 0 H8 L4 4.6 Z" fill="#f0f0f0"/></svg>
<svg class="b" style="left:390.4px;top:187.5px;" width="8" height="10" viewBox="0 0 10 10" preserveAspectRatio="none"><rect x="1" y="0.8" width="7" height="2.2" fill="#fff"/><rect x="3" y="3.9" width="5" height="2.2" fill="#fff"/><rect x="0" y="7" width="8" height="2.2" fill="#fff"/><rect x="7.9" y="0" width="1" height="10" fill="#22a53e"/></svg>
<svg class="b" style="left:390px;top:209.2px;" width="8.8" height="8.4" viewBox="0 0 10 10" preserveAspectRatio="none"><rect x="1.2" y="2" width="2.2" height="6" fill="#fff"/><rect x="4.3" y="4" width="2.2" height="4" fill="#fff"/><rect x="7.4" y="0.6" width="2.2" height="7.4" fill="#fff"/><rect x="0" y="8.7" width="10" height="1" fill="#22a53e"/></svg>
<svg class="b" style="left:411.8px;top:187.5px;" width="8" height="10" viewBox="0 0 10 10" preserveAspectRatio="none"><rect x="1.6" y="0.8" width="7" height="2.2" fill="#fff"/><rect x="1.6" y="3.9" width="5" height="2.2" fill="#fff"/><rect x="1.6" y="7" width="8" height="2.2" fill="#fff"/><rect x="0.1" y="0" width="1" height="10" fill="#22a53e"/></svg>
<svg class="b" style="left:411.4px;top:209.2px;" width="8.8" height="8.4" viewBox="0 0 10 10" preserveAspectRatio="none"><rect x="1.2" y="1.6" width="2.2" height="6" fill="#fff"/><rect x="4.3" y="1.6" width="2.2" height="4" fill="#fff"/><rect x="7.4" y="1.6" width="2.2" height="7.4" fill="#fff"/><rect x="0" y="0.5" width="10" height="1" fill="#22a53e"/></svg>
<svg class="b" style="left:433.7px;top:187.5px;" width="8" height="10" viewBox="0 0 10 10" preserveAspectRatio="none"><rect x="1" y="0.8" width="8" height="2.2" fill="#fff"/><rect x="2.4" y="3.9" width="5.2" height="2.2" fill="#fff"/><rect x="0.4" y="7" width="9.2" height="2.2" fill="#fff"/><rect x="4.5" y="0" width="1" height="10" fill="#22a53e"/></svg>
<svg class="b" style="left:433.3px;top:209.2px;" width="8.8" height="8.4" viewBox="0 0 10 10" preserveAspectRatio="none"><rect x="1.2" y="1" width="2.2" height="8" fill="#fff"/><rect x="4.3" y="2.4" width="2.2" height="5.2" fill="#fff"/><rect x="7.4" y="0.4" width="2.2" height="9.2" fill="#fff"/><rect x="0" y="4.5" width="10" height="1" fill="#22a53e"/></svg>
<svg class="b" style="left:455.4px;top:187.5px;" width="8" height="10" viewBox="0 0 10 10" preserveAspectRatio="none"><rect x="2" y="0.8" width="7" height="2.2" fill="#fff"/><rect x="4" y="3.9" width="5" height="2.2" fill="#fff"/><rect x="1" y="7" width="8" height="2.2" fill="#fff"/><rect x="8.5" y="0" width="1" height="10" fill="#22a53e"/></svg>
<svg class="b" style="left:455px;top:209.2px;" width="8.8" height="8.4" viewBox="0 0 10 10" preserveAspectRatio="none"><rect x="1.2" y="3" width="2.2" height="6" fill="#fff"/><rect x="4.3" y="5" width="2.2" height="4" fill="#fff"/><rect x="7.4" y="1.6" width="2.2" height="7.4" fill="#fff"/><rect x="0" y="8.7" width="10" height="1" fill="#22a53e"/></svg>
<svg class="b" style="left:477px;top:187.5px;" width="8" height="10" viewBox="0 0 10 10" preserveAspectRatio="none"><rect x="1.6" y="0.8" width="7" height="2.2" fill="#fff"/><rect x="1.6" y="3.9" width="5" height="2.2" fill="#fff"/><rect x="1.6" y="7" width="8" height="2.2" fill="#fff"/><rect x="0.1" y="0" width="1" height="10" fill="#22a53e"/></svg>
<svg class="b" style="left:476.6px;top:209.2px;" width="8.8" height="8.4" viewBox="0 0 10 10" preserveAspectRatio="none"><rect x="1.2" y="1.6" width="2.2" height="6" fill="#fff"/><rect x="4.3" y="1.6" width="2.2" height="4" fill="#fff"/><rect x="7.4" y="1.6" width="2.2" height="7.4" fill="#fff"/><rect x="0" y="0.5" width="10" height="1" fill="#22a53e"/></svg>
<svg class="b" style="left:497.5px;top:186.5px;overflow:hidden;" width="6" height="12" viewBox="0 0 6 12"><rect x="2.2" y="0" width="1" height="12" fill="#22a53e"/><text x="2.4" y="8.6" font-size="9" font-style="italic" fill="#d8d8d8">a</text></svg>
<svg class="b" style="left:496px;top:209px;" width="11" height="10" viewBox="0 0 11 10"><rect x="0" y="7.2" width="11" height="1" fill="#22a53e"/><text x="4" y="7.4" font-size="7.5" fill="#e8e8e8">ya</text><rect x=".6" y="5.2" width="2.4" height="2" fill="#fff"/></svg>
<svg class="b" style="left:390.4px;top:247.6px;" width="10.4" height="10" viewBox="0 0 10.4 10"><rect x=".8" y="3" width="3.2" height="6.4" fill="#fff"/><rect x="5.3" y="3.2" width="3.3" height="4.2" fill="#f0f0f0"/><path d="M1.6 0 V2 M5.6 0 V2" stroke="#22a53e" stroke-width=".9"/></svg>
<svg class="b" style="left:390.4px;top:268.4px;" width="10.4" height="10.4" viewBox="0 0 10.4 10.4"><rect x="3" y="1" width="6.4" height="2.8" fill="#fff"/><rect x="3" y="5.4" width="4" height="3.4" fill="#f4f4f4"/><path d="M0 1.4 H2.4 M0 5.8 H2.4" stroke="#22a53e" stroke-width=".9"/></svg>
<svg class="b" style="left:411.8px;top:247.6px;" width="10.4" height="10" viewBox="0 0 10.4 10"><rect x=".8" y="3" width="3.2" height="6.4" fill="#fff"/><rect x="5.3" y="3.2" width="3.3" height="4.2" fill="#f0f0f0"/><path d="M2.8 0 V2 M7 0 V2" stroke="#22a53e" stroke-width=".9"/></svg>
<svg class="b" style="left:411.8px;top:268.4px;" width="10.4" height="10.4" viewBox="0 0 10.4 10.4"><rect x="3" y="1" width="6.4" height="2.8" fill="#fff"/><rect x="3" y="5.4" width="4" height="3.4" fill="#f4f4f4"/><path d="M0 2.4 H2.4 M0 7 H2.4" stroke="#22a53e" stroke-width=".9"/></svg>
<svg class="b" style="left:433.7px;top:247.6px;" width="10.4" height="10" viewBox="0 0 10.4 10"><rect x=".8" y="3.2" width="3.2" height="4.2" fill="#f0f0f0"/><rect x="5.3" y="3" width="3.3" height="6.4" fill="#fff"/><path d="M3.8 0 V2 M8.4 0 V2" stroke="#22a53e" stroke-width=".9"/></svg>
<svg class="b" style="left:433.7px;top:268.4px;" width="10.4" height="10.4" viewBox="0 0 10.4 10.4"><rect x="4.4" y="1" width="3.2" height="3" fill="#e8e8e8"/><rect x="3" y="5.6" width="6.4" height="3.2" fill="#fff"/><path d="M0 3.8 H2.4 M0 8.6 H2.4" stroke="#22a53e" stroke-width=".9"/></svg>
<svg class="b" style="left:455.4px;top:247.6px;" width="10.4" height="10" viewBox="0 0 10.4 10"><rect x=".4" y="2.4" width="2" height="4.6" fill="#e8e8e8"/><rect x="4" y="2.4" width="2.4" height="6.6" fill="#fff"/><rect x="8" y="2.4" width="2" height="5.4" fill="#e8e8e8"/><path d="M0 .8 H10.4" stroke="#22a53e" stroke-width=".9" stroke-dasharray="1.6 1"/></svg>
<svg class="b" style="left:455.4px;top:268.4px;" width="10.4" height="10.4" viewBox="0 0 10.4 10.4"><rect x="3.2" y=".4" width="5.6" height="2" fill="#fff"/><rect x="3.2" y="4" width="4" height="2.4" fill="#fff"/><rect x="3.2" y="8" width="5.6" height="2" fill="#fff"/><path d="M1 0 V10.4" stroke="#22a53e" stroke-width=".9" stroke-dasharray="1.6 1"/></svg>
<svg class="b" style="left:476px;top:247px;overflow:hidden;" width="11" height="11" viewBox="0 0 11 11"><text x="1.4" y="8" font-size="7.6" fill="#d8d8d8">ay</text><path d="M1 1.4 H4" stroke="#22a53e" stroke-width=".9"/></svg>
<svg class="b" style="left:476px;top:268px;overflow:hidden;" width="11" height="12" viewBox="0 0 11 12"><path d="M1.4 3 V11 M1.4 6.4 H3.4" stroke="#22a53e" stroke-width="1"/><text x="4.4" y="9.6" font-size="8.5" fill="#d8d8d8">y</text><text x="5.6" y="4" font-size="4.5" fill="#d8d8d8">a</text></svg>
<svg class="b" style="left:390.4px;top:307.8px;" width="10" height="10" viewBox="0 0 10 10"><path d="M2 2 L8 3.4 L6.4 8.4 L2.8 6 Z" fill="none" stroke="#bdbdbd" stroke-width=".8"/><rect x="0.6" y="0.8" width="2.4" height="2.4" fill="#fff"/><rect x="6.8" y="2.2" width="2.4" height="2.4" fill="#fff"/><rect x="5.2" y="7.2" width="2.4" height="2.4" fill="#fff"/><rect x="1.6" y="4.8" width="2.4" height="2.4" fill="#fff"/></svg>
<svg class="b" style="left:411.8px;top:307.8px;" width="10" height="10" viewBox="0 0 10 10"><rect x="0.6" y="0.6" width="2.8" height="2.8" fill="#fff"/><rect x="6.6" y="6" width="3" height="3" fill="#fff"/><path d="M4 1.6 Q8 1.6 8 5" fill="none" stroke="#cfcfcf" stroke-width="1"/><path d="M2.2 5.4 Q.8 7.6 2.2 9 Q3.6 7.6 2.2 5.4 Z" fill="#2a8fe0"/></svg>
<svg class="b" style="left:433.7px;top:307.8px;" width="10" height="10" viewBox="0 0 10 10"><rect x="0.6" y="0.6" width="2.8" height="2.8" fill="#fff"/><rect x="6.6" y="6" width="3" height="3" fill="#fff"/><path d="M4 1.6 Q8 1.6 8 5" fill="none" stroke="#cfcfcf" stroke-width="1"/><path d="M3.6 5.2 L.8 7 L3.6 8.8 M.8 7 H5" fill="none" stroke="#2a8fe0" stroke-width="1"/></svg>
<svg class="b" style="left:455.4px;top:307.8px;" width="10" height="10" viewBox="0 0 10 10"><rect x="0.6" y="0.6" width="2.8" height="2.8" fill="#fff"/><rect x="6.6" y="6" width="3" height="3" fill="#fff"/><path d="M4 1.6 Q8 1.6 8 5" fill="none" stroke="#cfcfcf" stroke-width="1"/><rect x="1" y="5.8" width="3.2" height="3.2" fill="none" stroke="#2a6fb8" stroke-width=".9"/></svg>
<svg class="b" style="left:477px;top:307.8px;" width="10" height="10" viewBox="0 0 10 10"><rect x="2.2" y="0" width="2.2" height="2.2" fill="#f4f4f4"/><rect x="5.6" y="0" width="2.2" height="2.2" fill="#f4f4f4"/><rect x="0.4" y="2.6" width="2.2" height="2.2" fill="#f4f4f4"/><rect x="3.8" y="2.6" width="2.2" height="2.2" fill="#f4f4f4"/><rect x="7.2" y="2.6" width="2.2" height="2.2" fill="#f4f4f4"/><rect x="2" y="5.2" width="2.2" height="2.2" fill="#f4f4f4"/><rect x="5.4" y="5.2" width="2.2" height="2.2" fill="#f4f4f4"/><rect x="0.6" y="7.8" width="2.2" height="2.2" fill="#f4f4f4"/><rect x="4" y="7.8" width="2.2" height="2.2" fill="#f4f4f4"/><rect x="7.2" y="7.6" width="2.2" height="2.2" fill="#f4f4f4"/></svg>
<svg class="b" style="left:498.5px;top:307.8px;" width="10" height="10" viewBox="0 0 10 10"><path d="M2 5 L7.4 1.6 M2 5 L7.4 8.4" stroke="#a8a8a8" stroke-width=".9" stroke-dasharray="1.4 1"/><rect x="0.4" y="3.8" width="2.6" height="2.6" fill="#fff"/><rect x="6.4" y="0.4" width="2.6" height="2.6" fill="#fff"/><rect x="6.4" y="7" width="2.6" height="2.6" fill="#fff"/></svg>
<span class="t" id="t30_0" style="left:384.70px;top:346.30px;font-size:8px;line-height:12px;color:#e4e4e4;transform:scaleX(0.9700);">高</span>
<span class="t" id="t30_1" style="left:392.46px;top:346.30px;font-size:8px;line-height:12px;color:#e4e4e4;transform:scaleX(0.7175);">さ</span>
<span class="t" id="t30_2" style="left:398.20px;top:346.30px;font-size:8.96px;line-height:12px;color:#e4e4e4;transform:scaleX(0.8400);">:</span>
<div class="b" style="left:402px;top:343px;width:55.5px;height:16px;background:#262626;border-radius:2px;"></div>
<span class="t" id="t31_0" style="left:405.30px;top:346.30px;font-size:8.96px;line-height:12px;color:#e4e4e4;transform:scaleX(0.7624);">0</span>
<div class="b" style="left:428.7px;top:350.4px;width:9.4px;height:1.5px;background:#f0f0f0;"></div>
<div class="b" style="left:443.7px;top:350.4px;width:9.8px;height:1.5px;background:#f0f0f0;"></div>
<div class="b" style="left:447.85px;top:346.3px;width:1.5px;height:9.8px;background:#f0f0f0;"></div>
<span class="t" id="t32_0" style="left:459.50px;top:346.30px;font-size:8.96px;line-height:12px;color:#e4e4e4;transform:scaleX(0.8599);">V:</span>
<div class="b" style="left:468.5px;top:343px;width:55.5px;height:16px;background:#262626;border-radius:2px;"></div>
<span class="t" id="t33_0" style="left:471.50px;top:346.30px;font-size:8.96px;line-height:12px;color:#e4e4e4;transform:scaleX(0.7624);">0</span>
<div class="b" style="left:496px;top:350.4px;width:9.4px;height:1.5px;background:#f0f0f0;"></div>
<div class="b" style="left:511.3px;top:350.4px;width:9.8px;height:1.5px;background:#f0f0f0;"></div>
<div class="b" style="left:515.45px;top:346.3px;width:1.5px;height:9.8px;background:#f0f0f0;"></div>
<svg class="b" style="left:534px;top:346.5px;" width="9" height="9.4" viewBox="0 0 9 9.4"><rect x="0" y="1.6" width="2" height="7.8" fill="#fff"/><rect x="3.3" y="0" width="2" height="9.4" fill="#fff"/><rect x="6.6" y=".8" width="2" height="8.6" fill="#fff"/></svg>
<span class="t" id="t34_0" style="left:384.70px;top:380.60px;font-size:8px;line-height:12px;color:#e4e4e4;transform:scaleX(0.9524);">基準</span>
<span class="t" id="t34_1" style="left:399.94px;top:380.60px;font-size:8.96px;line-height:12px;color:#e4e4e4;transform:scaleX(0.8247);">:</span>
<div class="b" style="left:407.7px;top:376.6px;width:69.5px;height:18px;background:#262626;border-radius:2px;"></div>
<span class="t" id="t35_0" style="left:412.00px;top:380.60px;font-size:8px;line-height:12px;color:#e4e4e4;transform:scaleX(0.9400);">最初</span>
<span class="t" id="t35_1" style="left:427.04px;top:380.60px;font-size:8px;line-height:12px;color:#e4e4e4;transform:scaleX(0.6977);">の</span>
<span class="t" id="t35_2" style="left:432.62px;top:380.60px;font-size:8px;line-height:12px;color:#e4e4e4;transform:scaleX(0.9400);">選択部分</span>
<svg class="b" style="left:465.3px;top:383.4px;" width="8.4" height="5" viewBox="0 0 8.4 5"><path d="M0 0 H8.4 L4.2 4.8 Z" fill="#f0f0f0"/></svg>
<svg class="b" style="left:390.4px;top:401.4px;" width="10" height="10" viewBox="0 0 10 10"><path d="M1 2 H9 M1 8 Q3 6.4 5 8 T9 8" fill="none" stroke="#8a8a8a" stroke-width=".8" stroke-dasharray="1.2 1"/><rect x="0.8" y="3.6" width="2" height="2" fill="#22a53e"/><rect x="4" y="3.6" width="2" height="2" fill="#22a53e"/><rect x="7.2" y="3.6" width="2" height="2" fill="#22a53e"/></svg>
<svg class="b" style="left:411.2px;top:401.4px;" width="10" height="10" viewBox="0 0 10 10"><path d="M2 1 V9 M7.6 1 Q6 3 7.6 5 T7.6 9" fill="none" stroke="#8a8a8a" stroke-width=".8" stroke-dasharray="1.2 1"/><rect x="3.8" y="0.6" width="2" height="2" fill="#22a53e"/><rect x="3.8" y="3.8" width="2" height="2" fill="#22a53e"/><rect x="3.8" y="7" width="2" height="2" fill="#22a53e"/></svg>
<svg class="b" style="left:390.4px;top:440px;" width="10" height="10" viewBox="0 0 10 10"><path d="M1.6 1.6 H8.6" stroke="#22a53e" stroke-width="1.6" stroke-dasharray="1.6 .8"/><path d="M1 4.4 H9" stroke="#777" stroke-width=".7" stroke-dasharray="1 1"/><rect x="0.8" y="5.4" width="2.1" height="2.1" fill="#fff"/><rect x="4" y="5.4" width="2.1" height="2.1" fill="#fff"/><rect x="7.2" y="5.4" width="2.1" height="2.1" fill="#fff"/></svg>
<svg class="b" style="left:411.2px;top:440px;" width="10" height="10" viewBox="0 0 10 10"><rect x=".4" y=".6" width="2.2" height="8.4" fill="#22a53e"/><rect x="5.6" y="0.4" width="2.2" height="2.2" fill="#fff"/><rect x="5.6" y="3.6" width="2.2" height="2.2" fill="#fff"/><rect x="5.6" y="6.8" width="2.2" height="2.2" fill="#fff"/><path d="M8 2 L9.4 3.4 M8 6.6 L9.4 5.2" stroke="#bbb" stroke-width=".8"/></svg>
<div class="b" style="left:376px;top:456px;width:187px;height:1px;background:#272727;"></div>
<div class="b" style="left:417px;top:461.4px;width:103.5px;height:19px;background:#383838;border-radius:2px;box-shadow:0 0 0 .6px #242424;"></div>
<span class="t" id="t36_0" style="left:455.90px;top:465.65px;font-size:8.5px;line-height:12.5px;color:#e4e4e4;transform:scaleX(0.9213);">配列</span>
<span class="t" id="t36_1" style="left:471.58px;top:465.65px;font-size:9.52px;line-height:12.5px;color:#e4e4e4;transform:scaleX(0.7979);">(A)</span>
<svg class="b" style="left:575.8px;top:69px;" width="11" height="11" viewBox="0 0 12 12"><path d="M2 1.6 H7 L9.6 4.2 V10.6 H2 Z" fill="none" stroke="#f2f2f2" stroke-width="1.6" stroke-linejoin="round"/><path d="M6.4 2 V4.8 H9.2" fill="none" stroke="#f2f2f2" stroke-width="1"/><circle cx="10.2" cy="1.4" r="1.3" fill="#22a53e"/></svg>
<svg class="b" style="left:575.8px;top:90.5px;" width="11" height="11" viewBox="0 0 12 12"><path d="M.8 10 V2 H4.4 L5.6 3.4 H10.6 V5" fill="none" stroke="#f2f2f2" stroke-width="1.5" stroke-linejoin="round"/><path d="M.8 10.4 L2.6 5.6 H11.6 L9.8 10.4 Z" fill="#f2f2f2"/></svg>
<svg class="b" style="left:575.8px;top:112px;" width="11" height="11" viewBox="0 0 12 12"><path d="M.8 6.4 H11.2 V11 H.8 Z" fill="#f2f2f2"/><path d="M2.6 8.6 H9.4" stroke="#2f2f2f" stroke-width="1"/><path d="M6 .4 V3 M3.4 2.6 H8.6 L6 5.6 Z" fill="#22a53e" stroke="#22a53e" stroke-width="1.4"/></svg>
<svg class="b" style="left:575.8px;top:133px;" width="11" height="11" viewBox="0 0 12 12"><rect x="2.8" y="1" width="6.4" height="2.4" fill="#f2f2f2"/><rect x=".6" y="4.2" width="10.8" height="4.4" rx=".8" fill="#f2f2f2"/><rect x="2.8" y="7.4" width="6.4" height="3.6" fill="#f2f2f2" stroke="#2f2f2f" stroke-width=".8"/></svg>
<svg class="b" style="left:575.8px;top:164.5px;" width="11" height="11" viewBox="0 0 12 12"><path d="M3.6 1.6 H8 L10.4 4 V10.6 H3.6 V8.6 M3.6 4.6 V1.6" fill="none" stroke="#f2f2f2" stroke-width="1.6" stroke-linejoin="round"/><path d="M0 6.6 H5 M3.4 4.6 L5.8 6.6 L3.4 8.6" fill="none" stroke="#22a53e" stroke-width="1.4"/></svg>
<svg class="b" style="left:575.8px;top:185.5px;" width="11" height="11" viewBox="0 0 12 12"><path d="M8.4 8.6 V10.6 H1.6 V1.6 H6 L8.4 4 V4.6" fill="none" stroke="#f2f2f2" stroke-width="1.6" stroke-linejoin="round"/><path d="M5.4 6.6 H11 M9 4.6 L11.4 6.6 L9 8.6" fill="none" stroke="#22a53e" stroke-width="1.4"/></svg>
<svg class="b" style="left:575.8px;top:217.3px;" width="11" height="11" viewBox="0 0 12 12"><path d="M3 4.4 H7.4 Q9.6 4.4 9.6 6.8 Q9.6 9.2 7.4 9.2 H6" fill="none" stroke="#f2f2f2" stroke-width="1.5"/><path d="M4.8 2 L2.4 4.4 L4.8 6.8" fill="none" stroke="#f2f2f2" stroke-width="1.5"/></svg>
<svg class="b" style="left:575.8px;top:238.7px;" width="11" height="11" viewBox="0 0 12 12"><path d="M9 4.4 H4.6 Q2.4 4.4 2.4 6.8 Q2.4 9.2 4.6 9.2 H6" fill="none" stroke="#646464" stroke-width="1.5"/><path d="M7.2 2 L9.6 4.4 L7.2 6.8" fill="none" stroke="#646464" stroke-width="1.5"/></svg>
<svg class="b" style="left:575.8px;top:269.8px;" width="11" height="11" viewBox="0 0 12 12"><rect x=".8" y=".8" width="7" height="7" fill="#f2f2f2"/><rect x="4" y="4" width="7.2" height="7.2" fill="#9a9a9a" stroke="#f2f2f2" stroke-width="1"/></svg>
<svg class="b" style="left:575.8px;top:291.3px;" width="11" height="11" viewBox="0 0 12 12"><path d="M2.6 .6 L8.2 8 M9.4 .6 L3.8 8" stroke="#f2f2f2" stroke-width="1.5"/><circle cx="2.8" cy="9.4" r="1.9" fill="none" stroke="#f2f2f2" stroke-width="1.3"/><circle cx="9.2" cy="9.4" r="1.9" fill="none" stroke="#f2f2f2" stroke-width="1.3"/></svg>
<svg class="b" style="left:575.8px;top:312.8px;" width="11" height="11" viewBox="0 0 12 12"><rect x="1.6" y="2" width="8.8" height="9.2" fill="none" stroke="#f2f2f2" stroke-width="1.5"/><rect x="4" y=".6" width="4" height="2.4" fill="#f2f2f2"/><rect x="3.8" y="5" width="4.4" height="4" fill="#c8c8c8"/></svg>
<svg class="b" style="left:575.8px;top:344.1px;" width="11" height="11" viewBox="0 0 12 12"><circle cx="5.2" cy="5.2" r="4.6" fill="#f2f2f2"/><path d="M8.4 8.4 L11.4 11.4" stroke="#f2f2f2" stroke-width="2"/><rect x="2.6" y="2.8" width="5.2" height="4.8" fill="none" stroke="#3a3a3a" stroke-width=".9" stroke-dasharray="1.2 .8"/></svg>
<svg class="b" style="left:575.8px;top:366px;" width="11" height="11" viewBox="0 0 12 12"><circle cx="5.2" cy="5.2" r="4.6" fill="#f2f2f2"/><path d="M8.4 8.4 L11.4 11.4" stroke="#f2f2f2" stroke-width="2"/><path d="M5.2 2.2 L6.2 4.4 L8.4 4.6 L6.8 6.2 L7.2 8.4 L5.2 7.2 Z M2.2 5.2 A3 3 0 0 1 5.2 2.2 V8.2 A3 3 0 0 1 2.2 5.2" fill="#3a3a3a"/></svg>
<svg class="b" style="left:575.8px;top:387.7px;" width="11" height="11" viewBox="0 0 12 12"><circle cx="5.2" cy="5.2" r="4.6" fill="#f2f2f2"/><path d="M8.4 8.4 L11.4 11.4" stroke="#f2f2f2" stroke-width="2"/><rect x="3.4" y="2.4" width="3.6" height="5.6" fill="none" stroke="#3a3a3a" stroke-width="1"/></svg>
<svg class="b" style="left:575.8px;top:409.3px;" width="11" height="11" viewBox="0 0 12 12"><rect x="2.4" y="2.4" width="7.2" height="7.2" fill="none" stroke="#f2f2f2" stroke-width="1.1"/><path d="M.4 .4 L2.4 2.4 M11.6 .4 L9.6 2.4 M.4 11.6 L2.4 9.6 M11.6 11.6 L9.6 9.6" stroke="#f2f2f2" stroke-width="1"/><path d="M6 4.4 V7.6 M4.4 6 H7.6" stroke="#f2f2f2" stroke-width="1"/></svg>
<svg class="b" style="left:575.8px;top:440px;" width="11" height="11" viewBox="0 0 12 12"><rect x=".8" y=".8" width="7" height="7" fill="#f2f2f2"/><rect x="4" y="4" width="7.2" height="7.2" fill="#11a011"/></svg>
<svg class="b" style="left:575.8px;top:461.5px;" width="11" height="11" viewBox="0 0 12 12"><rect x="1.2" y="1.2" width="6.6" height="6.6" fill="#2f2f2f" stroke="#f2f2f2" stroke-width="1.3"/><rect x="4.2" y="4.2" width="6.8" height="6.8" fill="#2f2f2f" stroke="#f2f2f2" stroke-width="1.3"/><rect x="6.2" y="7.4" width="2.8" height="2.4" fill="#f2f2f2"/><path d="M6.8 7.6 V6.6 A.9 .9 0 0 1 8.4 6.6 V7.6" fill="none" stroke="#f2f2f2" stroke-width=".7"/></svg>
<svg class="b" style="left:575.8px;top:483.7px;" width="11" height="11" viewBox="0 0 12 12"><rect x="1.2" y="1.2" width="6.6" height="6.6" fill="#2f2f2f" stroke="#f2f2f2" stroke-width="1.3"/><rect x="4.2" y="4.2" width="6.8" height="6.8" fill="#2f2f2f" stroke="#f2f2f2" stroke-width="1.3"/><path d="M6.4 6 L9 9.6 M9 6 L6.4 9.6" stroke="#f2f2f2" stroke-width=".9"/></svg>
<svg class="b" style="left:575.8px;top:515px;" width="11" height="11" viewBox="0 0 12 12"><circle cx="4.6" cy="5" r="2.8" fill="#f2f2f2"/><rect x="5.4" y="6" width="4.2" height="3.6" fill="#c8c8c8"/><path d="M.6 2.6 V.6 H2.6 M9.4 .6 H11.4 V2.6 M11.4 9.4 V11.4 H9.4 M2.6 11.4 H.6 V9.4" fill="none" stroke="#22a53e" stroke-width="1.1"/></svg>
<svg class="b" style="left:575.8px;top:536.5px;" width="11" height="11" viewBox="0 0 12 12"><circle cx="6" cy="6" r="2.8" fill="#f2f2f2"/><path d="M1 1 L2.6 2.6 M11 1 L9.4 2.6 M1 11 L2.6 9.4 M11 11 L9.4 9.4 M6 .4 V2 M6 10 V11.6 M.4 6 H2 M10 6 H11.6" stroke="#bdbdbd" stroke-width="1" stroke-dasharray="1 .7"/></svg>
<svg class="b" style="left:575.8px;top:566.7px;" width="11" height="11" viewBox="0 0 12 12"><path d="M1.2 9.6 V1.4 H10.6" fill="none" stroke="#f2f2f2" stroke-width="1.3"/><path d="M3.6 9.4 L4.4 7.2 L9.8 2 L11 3.2 L5.8 8.6 Z" fill="#f2f2f2"/><circle cx="2.8" cy="10.4" r="1.2" fill="#2a8fe0"/></svg>
<svg class="b" style="left:575px;top:588.4px;" width="12" height="13" viewBox="0 0 12 13"><text x="6" y="10.4" text-anchor="middle" font-size="11" font-weight="bold" fill="#f2f2f2" font-family="Liberation Sans, sans-serif">T</text></svg>
<svg class="b" style="left:578.8px;top:612.6px;" width="4.6" height="8" viewBox="0 0 4.6 8"><path d="M.3 0 V8 L4.4 4 Z" fill="#dcdcdc"/></svg>
<svg class="b" style="left:5px;top:637.1px;" width="532" height="10.5" viewBox="0 0 532 10.5"><rect x=".4" y=".2" width="9.83" height="10" fill="#fff"/><path d="M.8 .6 L9.63 9.8 M9.63 .6 L.8 9.8" stroke="#9c1c1c" stroke-width="1"/><rect x="10.94" y="0" width="10.33" height="10.5" fill="#000000"/><rect x="21.57" y="0" width="10.33" height="10.5" fill="#1a1a1a"/><rect x="32.20" y="0" width="10.33" height="10.5" fill="#333333"/><rect x="42.84" y="0" width="10.33" height="10.5" fill="#4d4d4d"/><rect x="53.47" y="0" width="10.33" height="10.5" fill="#666666"/><rect x="64.11" y="0" width="10.33" height="10.5" fill="#808080"/><rect x="74.74" y="0" width="10.33" height="10.5" fill="#999999"/><rect x="85.38" y="0" width="10.33" height="10.5" fill="#b3b3b3"/><rect x="96.02" y="0" width="10.33" height="10.5" fill="#cccccc"/><rect x="106.65" y="0" width="10.33" height="10.5" fill="#e6e6e6"/><rect x="117.28" y="0" width="10.33" height="10.5" fill="#ececec"/><rect x="127.92" y="0" width="10.33" height="10.5" fill="#f2f2f2"/><rect x="138.56" y="0" width="10.33" height="10.5" fill="#f9f9f9"/><rect x="149.19" y="0" width="10.33" height="10.5" fill="#ffffff"/><rect x="159.83" y="0" width="10.33" height="10.5" fill="#800000"/><rect x="170.46" y="0" width="10.33" height="10.5" fill="#ff0000"/><rect x="181.09" y="0" width="10.33" height="10.5" fill="#808000"/><rect x="191.73" y="0" width="10.33" height="10.5" fill="#ffff00"/><rect x="202.37" y="0" width="10.33" height="10.5" fill="#008000"/><rect x="213.00" y="0" width="10.33" height="10.5" fill="#00ff00"/><rect x="223.64" y="0" width="10.33" height="10.5" fill="#008080"/><rect x="234.27" y="0" width="10.33" height="10.5" fill="#00ffff"/><rect x="244.91" y="0" width="10.33" height="10.5" fill="#000080"/><rect x="255.54" y="0" width="10.33" height="10.5" fill="#0000ff"/><rect x="266.18" y="0" width="10.33" height="10.5" fill="#800080"/><rect x="276.81" y="0" width="10.33" height="10.5" fill="#ff00ff"/><rect x="287.44" y="0" width="10.33" height="10.5" fill="#2b0000"/><rect x="298.08" y="0" width="10.33" height="10.5" fill="#550000"/><rect x="308.72" y="0" width="10.33" height="10.5" fill="#800000"/><rect x="319.35" y="0" width="10.33" height="10.5" fill="#aa0000"/><rect x="329.99" y="0" width="10.33" height="10.5" fill="#d40000"/><rect x="340.62" y="0" width="10.33" height="10.5" fill="#ff0000"/><rect x="351.25" y="0" width="10.33" height="10.5" fill="#ff2a2a"/><rect x="361.89" y="0" width="10.33" height="10.5" fill="#ff5555"/><rect x="372.52" y="0" width="10.33" height="10.5" fill="#ff8080"/><rect x="383.16" y="0" width="10.33" height="10.5" fill="#ffaaaa"/><rect x="393.80" y="0" width="10.33" height="10.5" fill="#ffd5d5"/><rect x="404.43" y="0" width="10.33" height="10.5" fill="#280b0b"/><rect x="415.06" y="0" width="10.33" height="10.5" fill="#501616"/><rect x="425.70" y="0" width="10.33" height="10.5" fill="#782121"/><rect x="436.33" y="0" width="10.33" height="10.5" fill="#a02c2c"/><rect x="446.97" y="0" width="10.33" height="10.5" fill="#c83737"/><rect x="457.61" y="0" width="10.33" height="10.5" fill="#d35f5f"/><rect x="468.24" y="0" width="10.33" height="10.5" fill="#de8787"/><rect x="478.88" y="0" width="10.33" height="10.5" fill="#e9afaf"/><rect x="489.51" y="0" width="10.33" height="10.5" fill="#f4d7d7"/><rect x="500.14" y="0" width="10.33" height="10.5" fill="#241c1c"/><rect x="510.78" y="0" width="10.33" height="10.5" fill="#483737"/><rect x="521.41" y="0" width="10.33" height="10.5" fill="#6c5353"/></svg>
<svg class="b" style="left:548px;top:636.5px;" width="10" height="7" viewBox="0 0 10 7"><path d="M1 5.8 L5 1.6 L9 5.8" fill="none" stroke="#f0f0f0" stroke-width="1.5"/></svg>
<svg class="b" style="left:567px;top:635.8px;" width="10" height="7" viewBox="0 0 10 7"><path d="M1 1.2 L5 5.4 L9 1.2" fill="none" stroke="#f0f0f0" stroke-width="1.5"/></svg>
<div class="b" style="left:582.5px;top:631.5px;width:12px;height:17px;background:#3a3a3a;border-radius:2px;"></div>
<svg class="b" style="left:584px;top:636px;" width="9" height="8" viewBox="0 0 9 8"><path d="M0 1 H9 M0 4 H9 M0 7 H9" stroke="#f4f4f4" stroke-width="1.3"/></svg>
<span class="t" id="t37_0" style="left:18.70px;top:649.30px;font-size:8px;line-height:12px;color:#e4e4e4;transform:scaleX(0.6459);">フィル</span>
<span class="t" id="t37_1" style="left:34.10px;top:649.30px;font-size:8.96px;line-height:12px;color:#e4e4e4;transform:scaleX(0.8400);">:</span>
<span class="t" id="t38_0" style="left:38.70px;top:649.30px;font-size:8px;line-height:12px;color:#e4e4e4;transform:scaleX(0.7500);">平</span>
<div class="b" style="left:47px;top:648.7px;width:31.2px;height:10px;background:#70b0b6;"></div>
<span class="t" id="t39_0" style="left:6.20px;top:659.50px;font-size:8px;line-height:12px;color:#e4e4e4;transform:scaleX(0.6975);">ストローク</span>
<span class="t" id="t39_1" style="left:34.10px;top:659.50px;font-size:8.96px;line-height:12px;color:#e4e4e4;transform:scaleX(0.8400);">:</span>
<span class="t" id="t40_0" style="left:38.70px;top:659.50px;font-size:8px;line-height:12px;color:#e4e4e4;transform:scaleX(0.7875);">線</span>
<span class="t" id="t41_0" style="left:48.70px;top:659.50px;font-size:8px;line-height:12px;color:#f8f8f8;transform:scaleX(0.6627);">アンセット</span>
<span class="t" id="t42_0" style="left:83.70px;top:658.60px;font-size:8.96px;line-height:12px;color:#cfcfcf;transform:scaleX(0.8614);">0.256</span>
<span class="t" id="t43_0" style="left:106.00px;top:653.20px;font-size:8.96px;line-height:12px;color:#e4e4e4;transform:scaleX(0.6876);">O:</span>
<div class="b" style="left:115px;top:649.5px;width:47px;height:18.8px;background:#262626;border-radius:2px;"></div>
<span class="t" id="t44_0" style="left:120.90px;top:653.00px;font-size:8.96px;line-height:12px;color:#e4e4e4;transform:scaleX(0.8159);">100</span>
<div class="b" style="left:142.5px;top:658.4px;width:7.8px;height:1.4px;background:#f0f0f0;"></div>
<div class="b" style="left:151.4px;top:658.4px;width:7.8px;height:1.2px;background:#555;"></div>
<div class="b" style="left:154.7px;top:655px;width:1.2px;height:7.8px;background:#555;"></div>
<div class="b" style="left:168.8px;top:654.5px;width:1.7px;height:11px;background:#3b82e6;"></div>
<span class="t" id="t45_0" style="left:173.70px;top:654.50px;font-size:8px;line-height:12px;color:#e4e4e4;transform:scaleX(0.7469);">レイヤー</span>
<span class="t" id="t45_1" style="left:197.43px;top:654.50px;font-size:8.96px;line-height:12px;color:#e4e4e4;transform:scaleX(0.8400);"> 1</span>
<svg class="b" style="left:218px;top:655.5px;" width="10" height="8.4" viewBox="0 0 10 8.4"><path d="M.6 4.6 Q5 .2 9.4 4.6 Q5 8.6 .6 4.6 Z" fill="none" stroke="#f0f0f0" stroke-width="1.2"/><circle cx="5" cy="4.6" r="1.6" fill="#f0f0f0"/><path d="M1.6 1.4 L2.4 2.4 M5 .2 V1.4 M8.4 1.4 L7.6 2.4" stroke="#f0f0f0" stroke-width=".8"/></svg>
<svg class="b" style="left:241.5px;top:654.8px;" width="8" height="10" viewBox="0 0 8 10"><rect x=".4" y="4.4" width="6.4" height="5.2" rx=".6" fill="#f4f4f4"/><path d="M4.4 4.6 V2.6 A1.7 1.7 0 0 1 7.6 2.6 V3.4" fill="none" stroke="#f4f4f4" stroke-width="1.1"/></svg>
<span class="t" id="t46_0" style="left:261.20px;top:648.70px;font-size:8.96px;line-height:12px;color:#fafafa;font-weight:bold;transform:scaleX(0.9229);">21</span>
<span class="t" id="t47_0" style="left:270.40px;top:648.70px;font-size:8.96px;line-height:12px;color:#e4e4e4;transform:scaleX(0.8400);"> </span>
<span class="t" id="t47_1" style="left:272.50px;top:648.70px;font-size:8px;line-height:12px;color:#e4e4e4;transform:scaleX(0.9700);">個</span>
<span class="t" id="t47_2" style="left:280.26px;top:648.70px;font-size:8px;line-height:12px;color:#e4e4e4;transform:scaleX(0.9175);">の</span>
<span class="t" id="t47_3" style="left:287.60px;top:648.70px;font-size:8.96px;line-height:12px;color:#e4e4e4;transform:scaleX(0.8400);"> </span>
<span class="t" id="t48_0" style="left:289.70px;top:648.70px;font-size:8px;line-height:12px;color:#fafafa;transform:scaleX(0.9492);">星形</span>
<span class="t" id="t48_1" style="left:304.89px;top:648.70px;font-size:8.96px;line-height:12px;color:#fafafa;transform:scaleX(0.8220);">, </span>
<span class="t" id="t48_2" style="left:308.98px;top:648.70px;font-size:8px;line-height:12px;color:#fafafa;transform:scaleX(0.9492);">円</span>
<span class="t" id="t48_3" style="left:316.58px;top:648.70px;font-size:8.96px;line-height:12px;color:#fafafa;transform:scaleX(0.8220);">/</span>
<span class="t" id="t48_4" style="left:318.63px;top:648.70px;font-size:8px;line-height:12px;color:#fafafa;transform:scaleX(0.9492);">弧</span>
<span class="t" id="t48_5" style="left:326.23px;top:648.70px;font-size:8.96px;line-height:12px;color:#fafafa;transform:scaleX(0.8220);">, </span>
<span class="t" id="t48_6" style="left:330.32px;top:648.70px;font-size:8px;line-height:12px;color:#fafafa;transform:scaleX(0.9492);">円</span>
<span class="t" id="t48_7" style="left:337.92px;top:648.70px;font-size:8.96px;line-height:12px;color:#fafafa;transform:scaleX(0.8220);">, </span>
<span class="t" id="t48_8" style="left:342.01px;top:648.70px;font-size:8px;line-height:12px;color:#fafafa;transform:scaleX(0.9492);">矩形</span>
<span class="t" id="t49_0" style="left:357.20px;top:648.70px;font-size:8.96px;line-height:12px;color:#e4e4e4;transform:scaleX(0.8400);"> </span>
<span class="t" id="t49_1" style="left:359.30px;top:648.70px;font-size:8px;line-height:12px;color:#e4e4e4;transform:scaleX(0.8031);">オブジェ</span>
<span class="t" id="t50_0" style="left:261.20px;top:658.90px;font-size:8px;line-height:12px;color:#e4e4e4;transform:scaleX(0.7298);">クトが</span>
<span class="t" id="t50_1" style="left:278.71px;top:658.90px;font-size:8px;line-height:12px;color:#e4e4e4;transform:scaleX(0.9700);">選択</span>
<span class="t" id="t50_2" style="left:294.23px;top:658.90px;font-size:8px;line-height:12px;color:#e4e4e4;transform:scaleX(0.7298);">されています</span>
<span class="t" id="t50_3" style="left:329.09px;top:658.90px;font-size:8.96px;line-height:12px;color:#e4e4e4;transform:scaleX(0.8400);"> </span>
<span class="t" id="t50_4" style="left:331.19px;top:658.90px;font-size:8px;line-height:12px;color:#e4e4e4;transform:scaleX(0.9700);">所属</span>
<span class="t" id="t50_5" style="left:346.71px;top:658.90px;font-size:8.96px;line-height:12px;color:#e4e4e4;transform:scaleX(0.8400);">: </span>
<span class="t" id="t50_6" style="left:350.90px;top:658.90px;font-size:8px;line-height:12px;color:#e4e4e4;transform:scaleX(0.7298);">レイヤー</span>
<span class="t" id="t50_7" style="left:374.08px;top:658.90px;font-size:8.96px;line-height:12px;color:#e4e4e4;transform:scaleX(0.8400);"> …</span>
<span class="t" id="t51_0" style="left:395.20px;top:648.60px;font-size:8.96px;line-height:12px;color:#e4e4e4;transform:scaleX(0.7675);">X:</span>
<span class="t" id="t52_0" style="left:395.80px;top:658.40px;font-size:8.96px;line-height:12px;color:#e4e4e4;transform:scaleX(0.7529);">Y:</span>
<span class="t" id="t53_0" style="left:412.70px;top:648.20px;font-size:8.96px;line-height:12px;color:#e4e4e4;transform:scaleX(0.8689);">132.75</span>
<span class="t" id="t54_0" style="left:412.70px;top:658.20px;font-size:8.96px;line-height:12px;color:#e4e4e4;transform:scaleX(0.8689);">232.22</span>
<span class="t" id="t55_0" style="left:443.50px;top:653.40px;font-size:8.96px;line-height:12px;color:#e4e4e4;transform:scaleX(0.8157);">Z:</span>
<div class="b" style="left:453px;top:650.5px;width:56px;height:17.6px;background:#262626;border-radius:2px;"></div>
<span class="t" id="t56_0" style="left:459.30px;top:653.20px;font-size:8.96px;line-height:12px;color:#e4e4e4;transform:scaleX(0.8760);">75%</span>
<div class="b" style="left:484.5px;top:658.6px;width:8.8px;height:1.4px;background:#f0f0f0;"></div>
<div class="b" style="left:496.8px;top:658.6px;width:9.4px;height:1.4px;background:#f0f0f0;"></div>
<div class="b" style="left:500.8px;top:654.6px;width:1.4px;height:9.4px;background:#f0f0f0;"></div>
<span class="t" id="t57_0" style="left:516.70px;top:653.40px;font-size:8.96px;line-height:12px;color:#e4e4e4;transform:scaleX(0.7805);">R:</span>
<div class="b" style="left:525.8px;top:650.5px;width:60.5px;height:17.6px;background:#262626;border-radius:2px;"></div>
<span class="t" id="t58_0" style="left:535.20px;top:653.20px;font-size:8.96px;line-height:12px;color:#e4e4e4;transform:scaleX(0.9184);">0.00°</span>
<div class="b" style="left:562.5px;top:658.6px;width:8.8px;height:1.4px;background:#f0f0f0;"></div>
<div class="b" style="left:574.8px;top:658.6px;width:9.4px;height:1.4px;background:#f0f0f0;"></div>
<div class="b" style="left:578.8px;top:654.6px;width:1.4px;height:9.4px;background:#f0f0f0;"></div>
</body></html>
